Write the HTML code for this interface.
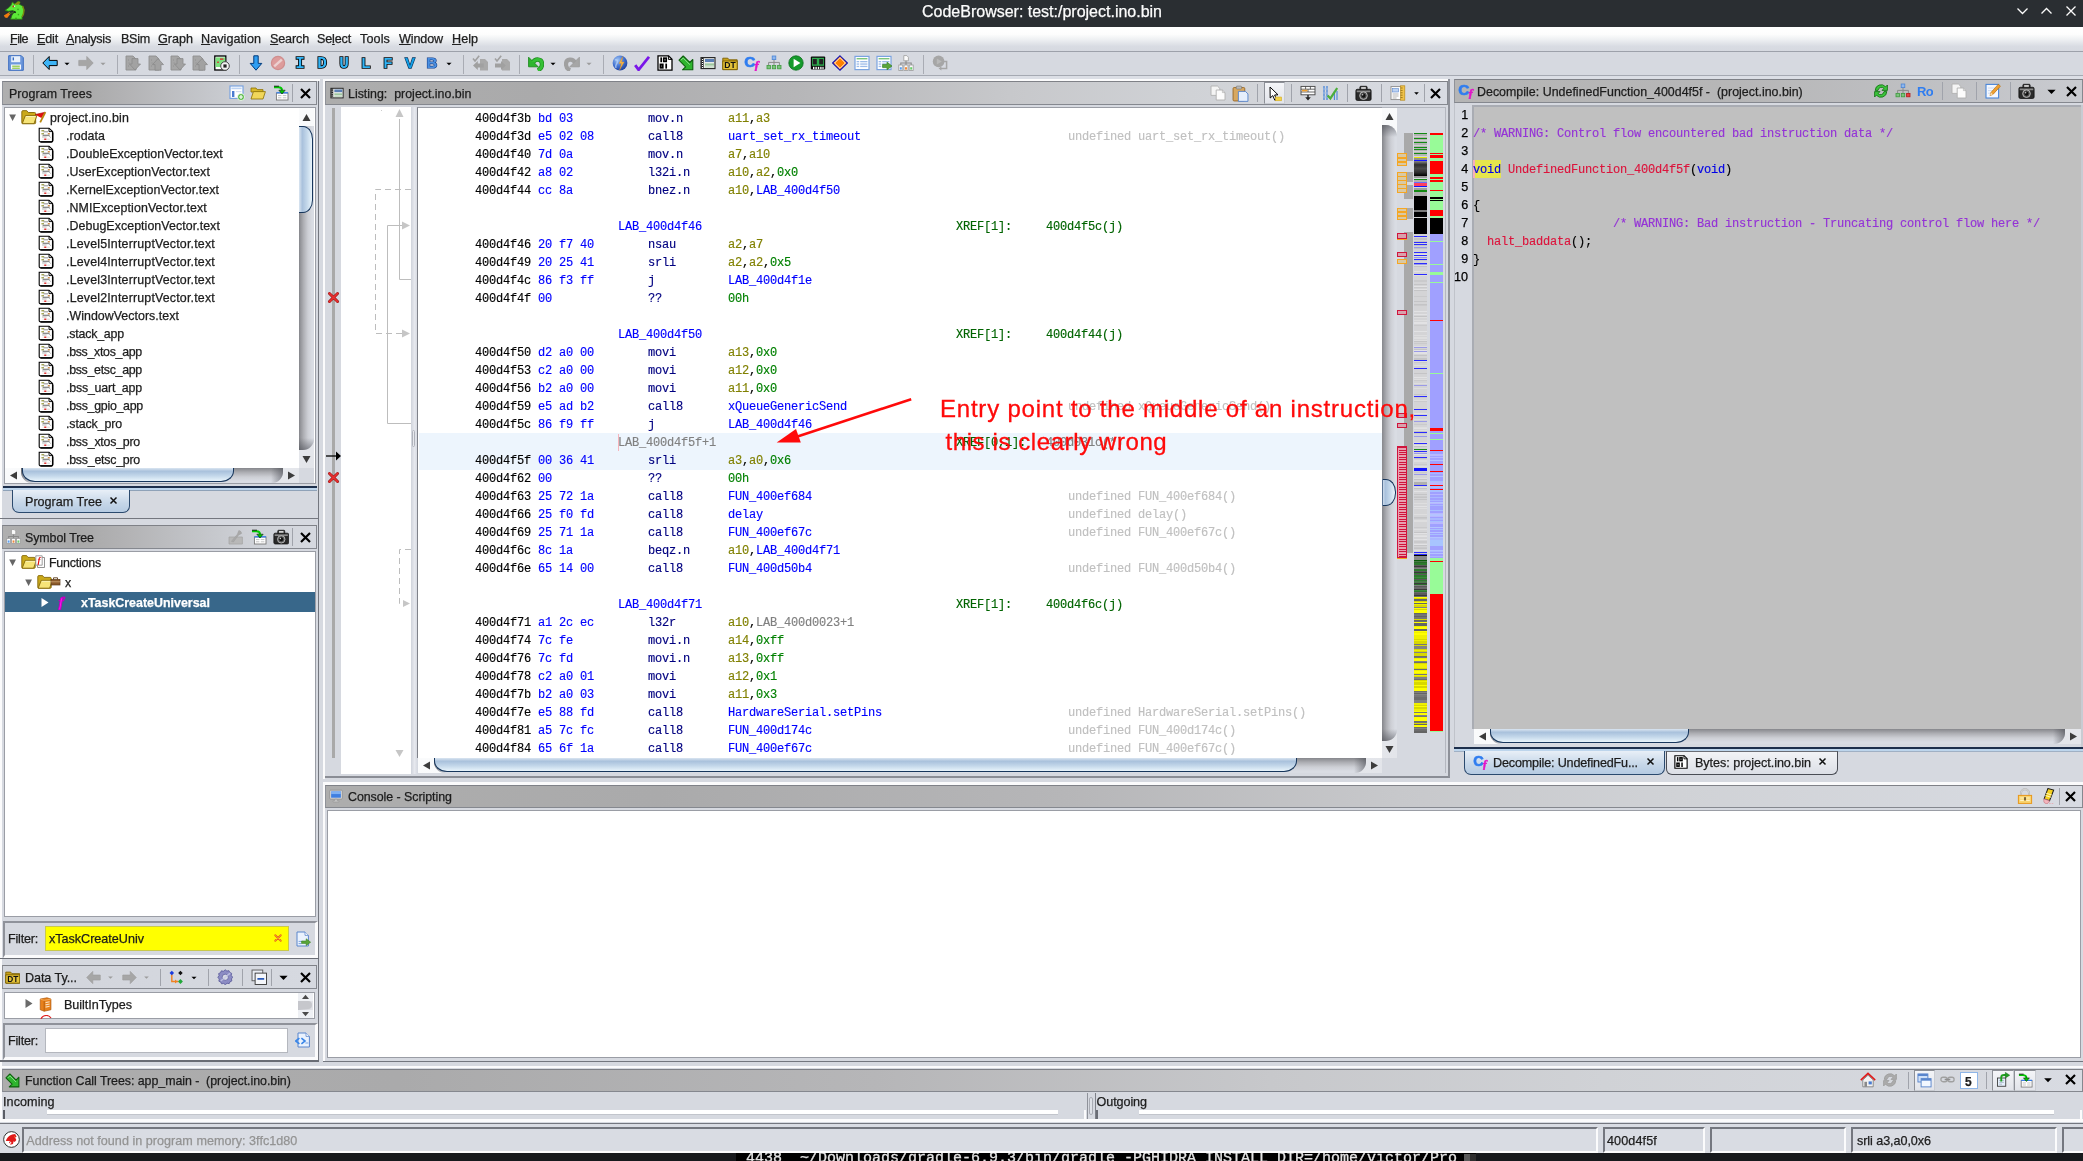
<!DOCTYPE html><html><head><meta charset="utf-8"><title>CodeBrowser</title><style>
*{margin:0;padding:0;box-sizing:border-box}
html,body{width:2083px;height:1161px;overflow:hidden;background:#d6d9e0}
body{position:relative;font-family:"Liberation Sans",sans-serif;font-size:13px;color:#1c1c1c}
div,svg{position:absolute}
.t{white-space:pre;line-height:18px;height:18px;-webkit-text-stroke:0.250px}
.m{white-space:pre;line-height:18px;height:18px;font-family:"Liberation Mono",monospace;font-size:12px;letter-spacing:-0.2px;-webkit-text-stroke:0.150px}
.hdr{background:linear-gradient(to right,#c9c9c9 0px,#ababab 90px,#b4b4b6 45%,#d3d6dd 88%);border:1px solid #8e9096;border-top-color:#9a9ca2}
.white{background:#fff}
u{text-decoration:underline;text-underline-offset:1px}
</style></head><body><div id="w" style="left:0;top:0;width:2083px;height:1161px;will-change:transform"><div style="left:0px;top:0px;width:2083px;height:27px;background:#2a2e32"></div><svg style="left:0;top:0" width="28" height="24" viewBox="0 0 28 24"><path d="M5.200 10.200L9 7.400l2-2.200L12.400 2l2.200 2.200L18 1.400l2.200.6-1 2.200 3.400 1.800 1.400 4-.6 4.200-1.400 2.600.2 2.400H10.600l1.400-4 2.200-3-1-1.800-4.600.8-3.200-.6z" fill="#5ce838" stroke="#2a7a12" stroke-width=".8" stroke-linejoin="round"/><path d="M12.400 2l2.200 2.200L18 1.400l2.200.6-1 2.200-3 .8z" fill="#8a8a10"/><path d="M22.600 6l1.400 4-.6 4.200-1.400 2.600" stroke="#7a8a10" stroke-width="1.400" fill="none"/><path d="M3.800 15.400L9.600 12l1 1.800-3.400 4.200-2.200-.4z" fill="#f07a10"/><path d="M9 13.600l4-1" stroke="#3a8a1a" stroke-width="1"/><circle cx="13.400" cy="6.400" r=".9" fill="#d02010"/><circle cx="14.600" cy="6.200" r=".7" fill="#e8e8e8"/><circle cx="18" cy="9.400" r=".8" fill="#3aa81a"/><circle cx="18.400" cy="14.600" r=".8" fill="#3aa81a"/><circle cx="16" cy="18.400" r="1" fill="#3aa81a"/><path d="M14.200 11.400l1.400 1.400" stroke="#111" stroke-width="1.600"/></svg><div class="t" style="left:922px;top:3px;font-size:16px;color:#fcfcfc;letter-spacing:-0.003px;">CodeBrowser: test:/project.ino.bin</div><svg style="left:2010px;top:0" width="73" height="27" viewBox="0 0 73 27"><g stroke="#fcfcfc" stroke-width="1.300" fill="none"><path d="M7.500 8.500l5 5 5-5"/><path d="M31.500 13.500l5-5 5 5"/><path d="M56.500 6.500l9 9M65.500 6.500l-9 9"/></g></svg><div style="left:0px;top:27px;width:2083px;height:24px;background:linear-gradient(to bottom,#ffffff 0%,#fdfdfd 30%,#eceef1 55%,#d9dce3 80%,#d6d9e0 100%)"></div><div class="t" style="left:10px;top:29.500px;font-size:12.600px;letter-spacing:-0.576px;color:#202020"><u>F</u>ile</div><div class="t" style="left:37px;top:29.500px;font-size:12.600px;letter-spacing:-0.178px;color:#202020"><u>E</u>dit</div><div class="t" style="left:66px;top:29.500px;font-size:12.600px;letter-spacing:-0.240px;color:#202020"><u>A</u>nalysis</div><div class="t" style="left:121px;top:29.500px;font-size:12.600px;letter-spacing:-0.276px;color:#202020">BSim</div><div class="t" style="left:158px;top:29.500px;font-size:12.600px;letter-spacing:-0.004px;color:#202020"><u>G</u>raph</div><div class="t" style="left:201px;top:29.500px;font-size:12.600px;letter-spacing:0.046px;color:#202020"><u>N</u>avigation</div><div class="t" style="left:270px;top:29.500px;font-size:12.600px;letter-spacing:-0.154px;color:#202020"><u>S</u>earch</div><div class="t" style="left:317px;top:29.500px;font-size:12.600px;letter-spacing:-0.170px;color:#202020">Se<u>l</u>ect</div><div class="t" style="left:360px;top:29.500px;font-size:12.600px;letter-spacing:0.117px;color:#202020">Tools</div><div class="t" style="left:399px;top:29.500px;font-size:12.600px;letter-spacing:-0.136px;color:#202020"><u>W</u>indow</div><div class="t" style="left:452px;top:29.500px;font-size:12.600px;letter-spacing:0.022px;color:#202020"><u>H</u>elp</div><div style="left:0px;top:51px;width:2083px;height:1px;background:#9da1aa"></div><div style="left:0px;top:52px;width:2083px;height:24px;background:#d6d9e0"></div><div style="left:0px;top:75px;width:2083px;height:1px;background:#a5a9b2"></div><div style="left:0px;top:76px;width:2083px;height:3px;background:#dbdee5"></div><svg style="left:8px;top:55px" width="16" height="16" viewBox="0 0 16 16"><path d="M.7 .7h12.600L15.300 2.700V15.300H.7z" fill="#6d98dc" stroke="#3b6cc0" stroke-width="1"/><rect x="3.200" y="1.200" width="9" height="6" fill="#e8f0fb"/><rect x="4.6" y="2.4" width="1.4" height="3" fill="#3b6cc0"/><rect x="3" y="9.5" width="10" height="5" fill="#f4f7fc"/><rect x="4.2" y="10.6" width="7.6" height="1.2" fill="#8cc63f"/><rect x="4.2" y="12.6" width="7.6" height="1.2" fill="#8cc63f"/></svg><svg style="left:42px;top:55px" width="16" height="16" viewBox="0 0 16 16"><path d="M7.2 1.5 L0.8 8 L7.2 14.5 V10.6 H15.2 V5.4 H7.2z" fill="#3db4f6" stroke="#000" stroke-width="1" stroke-linejoin="miter"/></svg><svg style="left:78px;top:55px" width="16" height="16" viewBox="0 0 16 16"><path d="M8.8 1.5 L15.2 8 L8.8 14.5 V10.6 H0.8 V5.4 H8.8z" fill="#a6a6a6" stroke="#a0a0a0" stroke-width=".8"/></svg><svg style="left:125px;top:55px" width="16" height="16" viewBox="0 0 16 16"><path d="M1 1h7l3 3v11H1z" fill="#a6a6a6" stroke="#8e8e8e" stroke-width=".9"/><path d="M3 5h1M3.600 8h1M3 11h1" stroke="#8e8e8e" stroke-width=".8"/><path d="M7 3.600h6v5.400h2.500L10 15 4.500 9H7z" fill="#a2a2a2" stroke="#8a8a8a" stroke-width=".8"/></svg><svg style="left:147.5px;top:55px" width="16" height="16" viewBox="0 0 16 16"><path d="M1 1h7l3 3v11H1z" fill="#a6a6a6" stroke="#8e8e8e" stroke-width=".9"/><path d="M3 5h1M3.600 8h1M3 11h1" stroke="#8e8e8e" stroke-width=".8"/><path d="M7 15.200h6V9.600h2.500L10 3.600 4.500 9.600H7z" fill="#a2a2a2" stroke="#8a8a8a" stroke-width=".8"/></svg><svg style="left:170px;top:55px" width="16" height="16" viewBox="0 0 16 16"><path d="M1 1h7l3 3v11H1z" fill="#a6a6a6" stroke="#8e8e8e" stroke-width=".9"/><path d="M3 5h1M3.600 8h1M3 11h1" stroke="#8e8e8e" stroke-width=".8"/><path d="M7 3.600h6v5.400h2.500L10 15 4.500 9H7z" fill="#a2a2a2" stroke="#8a8a8a" stroke-width=".8"/></svg><svg style="left:192px;top:55px" width="16" height="16" viewBox="0 0 16 16"><path d="M1 1h7l3 3v11H1z" fill="#a6a6a6" stroke="#8e8e8e" stroke-width=".9"/><path d="M3 5h1M3.600 8h1M3 11h1" stroke="#8e8e8e" stroke-width=".8"/><path d="M7 15.200h6V9.600h2.500L10 3.600 4.500 9.600H7z" fill="#a2a2a2" stroke="#8a8a8a" stroke-width=".8"/></svg><svg style="left:214px;top:55px" width="16" height="16" viewBox="0 0 16 16"><rect x=".8" y="1" width="11" height="14" fill="#fff" stroke="#000" stroke-width="1.3"/><rect x="1.6" y="2.4" width="9.6" height="9.6" fill="#7de07d"/><rect x="6" y="3.4" width="3.4" height="1.4" fill="#d33"/><rect x="3" y="6.6" width="2" height="1.2" fill="#d33"/><circle cx="11" cy="11" r="4.3" fill="#f2f2f2" stroke="#4a4a4a" stroke-width="1"/><rect x="9.4" y="9.4" width="3.2" height="3.2" fill="#222"/></svg><svg style="left:248px;top:55px" width="16" height="16" viewBox="0 0 16 16"><path d="M5.8 .8h4.4v7.6h3.6L8 15.2 2.2 8.4h3.6z" fill="#2f9ef2" stroke="#003a7a" stroke-width="1" stroke-linejoin="round"/></svg><svg style="left:270px;top:55px" width="16" height="16" viewBox="0 0 16 16"><circle cx="8" cy="8" r="6.600" fill="#dd9c9c" stroke="#cf8e8e" stroke-width="1.200"/><path d="M4.200 11.400L11.800 4.600" stroke="#ecd0d0" stroke-width="2.400"/></svg><svg style="left:292px;top:55px" width="16" height="16" viewBox="0 0 16 16"><text x="8" y="13.3" text-anchor="middle" font-family="Liberation Mono" font-weight="bold" font-size="16" fill="#32b4f5" stroke="#000" stroke-width="1.7" paint-order="stroke fill">I</text></svg><svg style="left:314px;top:55px" width="16" height="16" viewBox="0 0 16 16"><text x="8" y="13.3" text-anchor="middle" font-family="Liberation Mono" font-weight="bold" font-size="16" fill="#32b4f5" stroke="#000" stroke-width="1.7" paint-order="stroke fill">D</text></svg><svg style="left:335.5px;top:55px" width="16" height="16" viewBox="0 0 16 16"><text x="8" y="13.3" text-anchor="middle" font-family="Liberation Mono" font-weight="bold" font-size="16" fill="#32b4f5" stroke="#000" stroke-width="1.7" paint-order="stroke fill">U</text></svg><svg style="left:357.5px;top:55px" width="16" height="16" viewBox="0 0 16 16"><text x="8" y="13.3" text-anchor="middle" font-family="Liberation Sans" font-weight="bold" font-size="14.5" fill="#32b4f5" stroke="#000" stroke-width="1.7" paint-order="stroke fill">L</text></svg><svg style="left:379.5px;top:55px" width="16" height="16" viewBox="0 0 16 16"><text x="8" y="13.3" text-anchor="middle" font-family="Liberation Sans" font-weight="bold" font-size="14.5" fill="#32b4f5" stroke="#000" stroke-width="1.7" paint-order="stroke fill">F</text></svg><svg style="left:402px;top:55px" width="16" height="16" viewBox="0 0 16 16"><text x="8" y="13.4" text-anchor="middle" font-family="Liberation Sans" font-weight="bold" font-size="15" fill="#13a0e8" stroke="#06325a" stroke-width="1.3" paint-order="stroke fill">V</text></svg><svg style="left:424px;top:55px" width="16" height="16" viewBox="0 0 16 16"><text x="8" y="13.4" text-anchor="middle" font-family="Liberation Sans" font-weight="bold" font-size="15" fill="#4a90e2" stroke="#16408a" stroke-width="1.2" paint-order="stroke fill">B</text></svg><svg style="left:472px;top:55px" width="16" height="16" viewBox="0 0 16 16"><path d="M8 4h5l3 3v8.5H8z" fill="#a9a9a9"/><path d="M1 3.6l2 2.4L7.2 .8" stroke="#a0a0a0" stroke-width="1.6" fill="none"/><path d="M1 10.5L5.8 6v2.6h6v3.8h-6V15z" fill="#a0a0a0"/></svg><svg style="left:494px;top:55px" width="16" height="16" viewBox="0 0 16 16"><path d="M8 4h5l3 3v8.5H8z" fill="#a9a9a9"/><path d="M1 3.6l2 2.4L7.2 .8" stroke="#a0a0a0" stroke-width="1.6" fill="none"/><path d="M11.8 10.5L7 6v2.6H1v3.8h6V15z" fill="#a0a0a0"/></svg><svg style="left:528px;top:55px" width="16" height="16" viewBox="0 0 16 16"><path d="M5 7.400C7.200 3.400 14 3.400 14 9c0 3-1.600 5.200-4.200 6.200" stroke="#1d8a1d" stroke-width="4.400" fill="none"/><path d="M.6 2.200v9.600h9.600z" fill="#2fb62f" stroke="#1d8a1d" stroke-width=".9" stroke-linejoin="round"/><path d="M5 7.400C7.200 3.400 14 3.400 14 9c0 3-1.600 5.200-4.200 6.200" stroke="#35c035" stroke-width="3" fill="none"/></svg><svg style="left:564px;top:55px" width="16" height="16" viewBox="0 0 16 16"><path d="M11 7.400C8.800 3.400 2 3.400 2 9c0 3 1.600 5.200 4.200 6.200" stroke="#a0a0a0" stroke-width="4.200" fill="none"/><path d="M15.400 2.200v9.600H5.800z" fill="#a6a6a6" stroke="#9c9c9c" stroke-width=".9" stroke-linejoin="round"/></svg><svg style="left:612px;top:55px" width="16" height="16" viewBox="0 0 16 16"><defs><radialGradient id="gl" cx=".35" cy=".3" r=".8"><stop offset="0" stop-color="#9fc4f4"/><stop offset=".55" stop-color="#3f6fd0"/><stop offset="1" stop-color="#1c3a94"/></radialGradient></defs><circle cx="8" cy="8" r="7.4" fill="url(#gl)"/><path d="M3 5c2-1 3 1 2 3s-2 3-1 5" stroke="#bcd6f6" stroke-width="1.6" fill="none" opacity=".7"/><path d="M10.8 1.5L7 8.4h2.4L7.6 15l4.6-8H9.6z" fill="#f7b64a" stroke="#d98a1c" stroke-width=".4"/></svg><svg style="left:634px;top:55px" width="16" height="16" viewBox="0 0 16 16"><path d="M1.2 10.2L4.6 14.8 15 1.8" stroke="#7a16e8" stroke-width="2.8" fill="none" stroke-linejoin="miter"/></svg><svg style="left:656.5px;top:55px" width="16" height="16" viewBox="0 0 16 16"><path d="M1 .8h10.6L15 4.2V15.2H1z" fill="#fff" stroke="#000" stroke-width="1.3"/><path d="M11.4 .8v3.6H15" fill="none" stroke="#000" stroke-width="1"/><g fill="none" stroke="#000" stroke-width="1.700"><path d="M4.200 2.400v4.800"/><rect x="6.800" y="3.200" width="2.400" height="3.200"/><rect x="3.400" y="9.400" width="2.400" height="3.400"/><path d="M9.200 8.600v5"/></g></svg><svg style="left:678px;top:55px" width="16" height="16" viewBox="0 0 16 16"><path d="M4.500 14.800h10.300V4.500l-3 3L5.200 1 1 5.200l6.600 6.600z" fill="#2fb52f" stroke="#0d5e0d" stroke-width="1.100" stroke-linejoin="round"/><path d="M3 5.200l2.200-2.200 6.600 6.600" stroke="#8fe08f" stroke-width="1" fill="none"/></svg><svg style="left:700px;top:55px" width="16" height="16" viewBox="0 0 16 16"><rect x="1" y="2.6" width="14" height="11" fill="#e9ece9" stroke="#222" stroke-width="1.1"/><rect x="1.4" y="3" width="2.2" height="10.2" fill="#111"/><g fill="#fff"><rect x="2" y="4" width="1" height="1"/><rect x="2" y="6" width="1" height="1"/><rect x="2" y="8" width="1" height="1"/><rect x="2" y="10" width="1" height="1"/><rect x="2" y="12" width="1" height="1"/></g><rect x="5" y="4" width="9" height="3" fill="#5b7fb5"/><rect x="5" y="8.4" width="9" height="2.2" fill="#9ec79e"/><rect x="5" y="11.2" width="9" height="1.4" fill="#c7dcc7"/></svg><svg style="left:722px;top:55px" width="16" height="16" viewBox="0 0 16 16"><path d="M.8 3.2h5l1.4 1.6h8v9.8H.8z" fill="#c9a21a" stroke="#7a5e00" stroke-width=".9"/><path d="M.8 6h14.4v8.6H.8z" fill="#e3c23a" stroke="#7a5e00" stroke-width=".9"/><text x="8" y="13.4" text-anchor="middle" font-family="Liberation Sans" font-weight="bold" font-size="8.6" fill="#111">DT</text></svg><svg style="left:744px;top:55px" width="16" height="16" viewBox="0 0 16 16"><text x="5.800" y="12" text-anchor="middle" font-family="Liberation Sans" font-weight="bold" font-size="15.500" fill="#2f7df0" stroke="#2f7df0" stroke-width=".7">C</text><text x="12.600" y="15.400" text-anchor="middle" font-family="Liberation Serif" font-style="italic" font-weight="bold" font-size="12.500" fill="#e414c8" stroke="#e414c8" stroke-width=".5">f</text></svg><svg style="left:766px;top:55px" width="16" height="16" viewBox="0 0 16 16"><rect x="6.2" y="1" width="3.6" height="3.6" fill="#8fb7ee" stroke="#4a86d8" stroke-width=".8"/><path d="M8 4.8v2.6M2.6 10V7.4h10.8V10M8 7.4V10" stroke="#8a8a8a" stroke-width="1" fill="none"/><g fill="#7cc47c" stroke="#3f9a3f" stroke-width=".8"><rect x="1" y="10.4" width="3.4" height="3.4"/><rect x="6.3" y="10.4" width="3.4" height="3.4"/><rect x="11.6" y="10.4" width="3.4" height="3.4"/></g></svg><svg style="left:788px;top:55px" width="16" height="16" viewBox="0 0 16 16"><circle cx="8" cy="8" r="7.2" fill="#159a2c" stroke="#0b6e1c" stroke-width=".8"/><path d="M5.6 3.8L12.4 8l-6.8 4.2z" fill="#fff"/></svg><svg style="left:810px;top:55px" width="16" height="16" viewBox="0 0 16 16"><rect x=".8" y="1.4" width="14.4" height="13.2" rx="1" fill="#0a0a0a"/><rect x="2" y="2.8" width="12" height="8" fill="#2fae4f"/><rect x="2.8" y="4" width="4" height="5.4" fill="#222"/><rect x="9.2" y="4" width="4" height="5.4" fill="#222"/><g fill="#fff"><rect x="3" y="11.8" width="1.4" height="2.4"/><rect x="5.4" y="11.8" width="1.4" height="2.4"/><rect x="7.8" y="11.8" width="1.4" height="2.4"/><rect x="10.2" y="11.8" width="1.4" height="2.4"/><rect x="12.4" y="11.8" width="1.2" height="2.4"/></g></svg><svg style="left:832px;top:55px" width="16" height="16" viewBox="0 0 16 16"><path d="M8 .8L15.4 8 8 15.2 .6 8z" fill="#ff8000" stroke="#1414b4" stroke-width="1.1"/><path d="M8 2.6L13.4 8 8 13.4 2.6 8z" fill="none" stroke="#fff" stroke-width=".9"/></svg><svg style="left:854px;top:55px" width="16" height="16" viewBox="0 0 16 16"><rect x="1" y="1.4" width="14" height="13.2" fill="#fff" stroke="#7aa3e0" stroke-width="1.2"/><rect x="2.6" y="3" width="10.8" height="1.4" fill="#7cc47c"/><g fill="#9dbbe8"><rect x="2.6" y="6" width="2.6" height="1.3"/><rect x="6.2" y="6" width="7.2" height="1.3"/><rect x="2.6" y="8.4" width="2.6" height="1.3"/><rect x="6.2" y="8.4" width="7.2" height="1.3"/><rect x="2.6" y="10.8" width="2.6" height="1.3"/><rect x="6.2" y="10.8" width="7.2" height="1.3"/></g></svg><svg style="left:876px;top:55px" width="16" height="16" viewBox="0 0 16 16"><rect x="1" y="1.4" width="14" height="13.2" fill="#fff" stroke="#7aa3e0" stroke-width="1.2"/><rect x="2.6" y="3" width="10.8" height="1.4" fill="#7cc47c"/><g fill="#9dbbe8"><rect x="2.6" y="6" width="2.6" height="1.3"/><rect x="6.2" y="6" width="7.2" height="1.3"/><rect x="2.6" y="8.4" width="2.6" height="1.3"/><rect x="6.2" y="8.4" width="7.2" height="1.3"/><rect x="2.6" y="10.8" width="2.6" height="1.3"/><rect x="6.2" y="10.8" width="7.2" height="1.3"/></g><path d="M6.6 9.4h4.4V7.2l5 3.8-5 3.8v-2.2H6.6z" fill="#5aa63a" stroke="#3a8222" stroke-width=".7"/></svg><svg style="left:898px;top:55px" width="16" height="16" viewBox="0 0 16 16"><path d="M5.800 .6h3l1.600 1.600v3.600H5.800z" fill="#fbfbfb" stroke="#9a9a9a" stroke-width=".8"/><path d="M8 5.800v2.200M2.800 10.200V8h10.400v2.200M8 8v2.200" stroke="#8a8a8a" stroke-width="1.100" fill="none"/><g stroke="#9a9a9a" stroke-width=".8" fill="#fbfbfb"><rect x=".8" y="10" width="4" height="5.400"/><rect x="6" y="10" width="4" height="5.400"/><rect x="11.200" y="10" width="4" height="5.400"/></g><rect x="1.800" y="12.200" width="2" height="2.400" fill="#5a9ef0"/><rect x="7" y="12.200" width="2" height="2.400" fill="#f08a3a"/><rect x="12.200" y="12.200" width="2" height="2.400" fill="#6acc6a"/></svg><svg style="left:932px;top:55px" width="16" height="16" viewBox="0 0 16 16"><circle cx="6.6" cy="6.4" r="5.8" fill="#a6a6a6"/><path d="M4.8 3.4l5 3-5 3z" fill="#b9b9b9"/><path d="M12 6.4h2.6v7H8.4" stroke="#a6a6a6" stroke-width="1.5" fill="none"/><path d="M9.4 11.2L6.6 13.4l2.8 2.2z" fill="#a6a6a6"/></svg><svg style="left:61px;top:57.5px" width="12" height="12" viewBox="0 0 16 16"><path d="M4.6 6.2h6.8L8 9.8z" fill="#000"/></svg><svg style="left:443px;top:57.5px" width="12" height="12" viewBox="0 0 16 16"><path d="M4.6 6.2h6.8L8 9.8z" fill="#000"/></svg><svg style="left:547px;top:57.5px" width="12" height="12" viewBox="0 0 16 16"><path d="M4.6 6.2h6.8L8 9.8z" fill="#000"/></svg><svg style="left:97px;top:57.5px" width="12" height="12" viewBox="0 0 16 16"><path d="M4.6 6.4h6.8L8 9.8z" fill="#9c9c9c"/></svg><svg style="left:583px;top:57.5px" width="12" height="12" viewBox="0 0 16 16"><path d="M4.6 6.4h6.8L8 9.8z" fill="#9c9c9c"/></svg><div style="left:33px;top:55px;width:1px;height:19px;background:#a9acb4"></div><div style="left:117px;top:55px;width:1px;height:19px;background:#a9acb4"></div><div style="left:239px;top:55px;width:1px;height:19px;background:#a9acb4"></div><div style="left:463px;top:55px;width:1px;height:19px;background:#a9acb4"></div><div style="left:519px;top:55px;width:1px;height:19px;background:#a9acb4"></div><div style="left:603px;top:55px;width:1px;height:19px;background:#a9acb4"></div><div style="left:923px;top:55px;width:1px;height:19px;background:#a9acb4"></div><div style="left:0px;top:79px;width:320px;height:2px;background:#fbfbfc"></div><div style="left:0px;top:79px;width:2px;height:1043px;background:#fbfbfc"></div><div style="left:317.6px;top:81px;width:1.1px;height:980px;background:#74777f"></div><div style="left:2px;top:81px;width:315px;height:24px;background:linear-gradient(to right,#afafaf 0px,#a8a8a8 75px,#b3b3b5 40%,#cfd2d8 80%,#d6d9e0 100%);border:1px solid #85888f;border-top-color:#7f8187;border-left-color:#8f9299"></div><div class="t" style="left:9px;top:84.6px;font-size:12.4px;letter-spacing:0.077px;">Program Trees</div><svg style="left:229px;top:85px" width="16" height="16" viewBox="0 0 16 16"><rect x="1" y="1" width="13" height="12.4" fill="#fff" stroke="#7aa3e0" stroke-width="1.2"/><rect x="2.4" y="2.6" width="10.2" height="1.6" fill="#bcd2f2"/><rect x="3" y="6" width="2.4" height="6" fill="#4a7bd0"/><rect x="6.8" y="6" width="5.6" height="1.2" fill="#d0dcf0"/><circle cx="12" cy="12" r="3.5" fill="#57b947" stroke="#fff" stroke-width=".8"/><path d="M12 10v4M10 12h4" stroke="#fff" stroke-width="1.2"/></svg><svg style="left:250px;top:84.5px" width="16" height="16" viewBox="0 0 16 16"><path d="M1 3h5l1.2 1.6H13V7H1z" fill="#d9b92a" stroke="#8a6e00" stroke-width=".8"/><path d="M3.4 6.6h12L13 14H1z" fill="#f0d65a" stroke="#8a6e00" stroke-width=".8" stroke-linejoin="round"/></svg><svg style="left:273px;top:85px" width="16" height="16" viewBox="0 0 16 16"><rect x="3.4" y="8" width="11.6" height="7" fill="#fff" stroke="#777" stroke-width=".9"/><rect x="3.4" y="7.2" width="11.6" height="1.2" fill="#2f7df0"/><path d="M5 10.6h3.4M9.8 10.6h3.6M5 12.8h3.4M9.8 12.8h3.6" stroke="#bbb" stroke-width=".9"/><path d="M1 2.2h4.4c2.2 0 3.6 1 3.6 3" stroke="#00c800" stroke-width="1.9" fill="none"/><path d="M1 1.2h5" stroke="#000" stroke-width=".8"/><path d="M5.8 5.2h6.4L9 9z" fill="#00c800" stroke="#000" stroke-width=".5"/></svg><div style="left:292px;top:84px;width:1px;height:18px;background:#a0a3ab"></div><svg style="left:297.5px;top:85.5px" width="15" height="15" viewBox="0 0 16 16"><path d="M3.2 3.2L12.8 12.8M12.8 3.2L3.2 12.8" stroke="#000" stroke-width="2.3" fill="none"/></svg><div style="left:3px;top:105px;width:314px;height:382px;background:#d6d9e0"></div><div style="left:4px;top:107px;width:312px;height:377px;background:#fff;border:1px solid #9a9da5"></div><svg style="left:8px;top:113px" width="10" height="9" viewBox="0 0 10 9"><path d="M1.200 1.500h6.800L4.600 8z" fill="#666"/></svg><svg style="left:21.25px;top:108.55px" width="16.5" height="16.5" viewBox="0 0 16 16"><path d="M.8 2.600a1 1 0 0 1 1-1h3.800l1.400 1.800h6.200a1 1 0 0 1 1 1V13.400a.8.800 0 0 1-.8.800H1.600a.8.800 0 0 1-.8-.8z" fill="#caa91a" stroke="#86690a" stroke-width=".9"/><path d="M4.200 6.400h11.200L12.600 14.200H1.200z" fill="#f6e478" stroke="#86690a" stroke-width=".9" stroke-linejoin="round"/><path d="M4.800 7.300h9.400" stroke="#fdf8c8" stroke-width=".8"/></svg><svg style="left:34px;top:110px" width="13" height="14" viewBox="0 0 13 14"><path d="M1 4.600L11.200 2.200 7.400 8z" fill="#e01010"/><path d="M1 4.600L11.200 2.200" stroke="#a00808" stroke-width=".6"/><path d="M11.400 2.200L6.200 12.400" stroke="#b8860b" stroke-width="1.800"/></svg><div class="t" style="left:50px;top:108.5px;font-size:12.4px;letter-spacing:0.120px;">project.ino.bin</div><svg style="left:38px;top:127.3px" width="16" height="16" viewBox="0 0 16 16"><path d="M1.200 1.200h9.800l3.600 3.400V13.600a1.200 1.200 0 0 1-1.200 1.200H2.400a1.200 1.200 0 0 1-1.200-1.200z" fill="#fff" stroke="#000" stroke-width="1.100"/><path d="M2.400 14.900h11a1.300 1.300 0 0 0 1.300-1.300V5.600" fill="none" stroke="#000" stroke-width="1.500"/><path d="M11 1.200v3.400h3.600" fill="none" stroke="#000" stroke-width=".9"/><path d="M3.400 3.800h2.800" stroke="#8a8a20" stroke-width="1.100"/><path d="M5.400 4.800h4.600" stroke="#9a9a9a" stroke-width="1.100"/><path d="M3.400 6.800h2.600" stroke="#8a8a20" stroke-width="1.100"/><path d="M9.800 6.800h2" stroke="#c06a10" stroke-width="1.100"/><path d="M4.600 8.400h7" stroke="#8c8c8c" stroke-width="1.500"/><path d="M4 10h4.600" stroke="#bdbdbd" stroke-width="1"/><path d="M11.400 9.400l1.200 1" stroke="#777" stroke-width=".8"/><path d="M6.200 12.200h2.200" stroke="#d81818" stroke-width="1.300"/><path d="M4.600 12.200h1M9.200 12.200h2.600" stroke="#d0d0d0" stroke-width=".9"/></svg><div class="t" style="left:66px;top:126.5px;font-size:12.4px;letter-spacing:0.056px;">.rodata</div><svg style="left:38px;top:145.3px" width="16" height="16" viewBox="0 0 16 16"><path d="M1.200 1.200h9.800l3.600 3.400V13.600a1.200 1.200 0 0 1-1.200 1.200H2.400a1.200 1.200 0 0 1-1.200-1.200z" fill="#fff" stroke="#000" stroke-width="1.100"/><path d="M2.400 14.900h11a1.300 1.300 0 0 0 1.300-1.300V5.600" fill="none" stroke="#000" stroke-width="1.500"/><path d="M11 1.200v3.400h3.600" fill="none" stroke="#000" stroke-width=".9"/><path d="M3.400 3.800h2.800" stroke="#8a8a20" stroke-width="1.100"/><path d="M5.400 4.800h4.600" stroke="#9a9a9a" stroke-width="1.100"/><path d="M3.400 6.800h2.600" stroke="#8a8a20" stroke-width="1.100"/><path d="M9.800 6.800h2" stroke="#c06a10" stroke-width="1.100"/><path d="M4.600 8.400h7" stroke="#8c8c8c" stroke-width="1.500"/><path d="M4 10h4.600" stroke="#bdbdbd" stroke-width="1"/><path d="M11.400 9.400l1.200 1" stroke="#777" stroke-width=".8"/><path d="M6.200 12.200h2.200" stroke="#d81818" stroke-width="1.300"/><path d="M4.600 12.200h1M9.200 12.200h2.600" stroke="#d0d0d0" stroke-width=".9"/></svg><div class="t" style="left:66px;top:144.5px;font-size:12.4px;letter-spacing:0.070px;">.DoubleExceptionVector.text</div><svg style="left:38px;top:163.3px" width="16" height="16" viewBox="0 0 16 16"><path d="M1.200 1.200h9.800l3.600 3.400V13.600a1.200 1.200 0 0 1-1.200 1.200H2.400a1.200 1.200 0 0 1-1.200-1.200z" fill="#fff" stroke="#000" stroke-width="1.100"/><path d="M2.400 14.900h11a1.300 1.300 0 0 0 1.300-1.300V5.600" fill="none" stroke="#000" stroke-width="1.500"/><path d="M11 1.200v3.400h3.600" fill="none" stroke="#000" stroke-width=".9"/><path d="M3.400 3.800h2.800" stroke="#8a8a20" stroke-width="1.100"/><path d="M5.400 4.800h4.600" stroke="#9a9a9a" stroke-width="1.100"/><path d="M3.400 6.800h2.600" stroke="#8a8a20" stroke-width="1.100"/><path d="M9.800 6.800h2" stroke="#c06a10" stroke-width="1.100"/><path d="M4.600 8.400h7" stroke="#8c8c8c" stroke-width="1.500"/><path d="M4 10h4.600" stroke="#bdbdbd" stroke-width="1"/><path d="M11.400 9.400l1.200 1" stroke="#777" stroke-width=".8"/><path d="M6.200 12.200h2.200" stroke="#d81818" stroke-width="1.300"/><path d="M4.600 12.200h1M9.200 12.200h2.600" stroke="#d0d0d0" stroke-width=".9"/></svg><div class="t" style="left:66px;top:162.5px;font-size:12.4px;letter-spacing:0.081px;">.UserExceptionVector.text</div><svg style="left:38px;top:181.3px" width="16" height="16" viewBox="0 0 16 16"><path d="M1.200 1.200h9.800l3.600 3.400V13.600a1.200 1.200 0 0 1-1.200 1.200H2.400a1.200 1.200 0 0 1-1.200-1.200z" fill="#fff" stroke="#000" stroke-width="1.100"/><path d="M2.400 14.900h11a1.300 1.300 0 0 0 1.300-1.300V5.600" fill="none" stroke="#000" stroke-width="1.500"/><path d="M11 1.200v3.400h3.600" fill="none" stroke="#000" stroke-width=".9"/><path d="M3.400 3.800h2.800" stroke="#8a8a20" stroke-width="1.100"/><path d="M5.400 4.800h4.600" stroke="#9a9a9a" stroke-width="1.100"/><path d="M3.400 6.800h2.600" stroke="#8a8a20" stroke-width="1.100"/><path d="M9.800 6.800h2" stroke="#c06a10" stroke-width="1.100"/><path d="M4.600 8.400h7" stroke="#8c8c8c" stroke-width="1.500"/><path d="M4 10h4.600" stroke="#bdbdbd" stroke-width="1"/><path d="M11.400 9.400l1.200 1" stroke="#777" stroke-width=".8"/><path d="M6.200 12.200h2.200" stroke="#d81818" stroke-width="1.300"/><path d="M4.600 12.200h1M9.200 12.200h2.600" stroke="#d0d0d0" stroke-width=".9"/></svg><div class="t" style="left:66px;top:180.5px;font-size:12.4px;letter-spacing:0.050px;">.KernelExceptionVector.text</div><svg style="left:38px;top:199.3px" width="16" height="16" viewBox="0 0 16 16"><path d="M1.200 1.200h9.800l3.600 3.400V13.600a1.200 1.200 0 0 1-1.200 1.200H2.400a1.200 1.200 0 0 1-1.200-1.200z" fill="#fff" stroke="#000" stroke-width="1.100"/><path d="M2.400 14.900h11a1.300 1.300 0 0 0 1.300-1.300V5.600" fill="none" stroke="#000" stroke-width="1.500"/><path d="M11 1.200v3.400h3.600" fill="none" stroke="#000" stroke-width=".9"/><path d="M3.400 3.800h2.800" stroke="#8a8a20" stroke-width="1.100"/><path d="M5.400 4.800h4.600" stroke="#9a9a9a" stroke-width="1.100"/><path d="M3.400 6.800h2.600" stroke="#8a8a20" stroke-width="1.100"/><path d="M9.800 6.800h2" stroke="#c06a10" stroke-width="1.100"/><path d="M4.600 8.400h7" stroke="#8c8c8c" stroke-width="1.500"/><path d="M4 10h4.600" stroke="#bdbdbd" stroke-width="1"/><path d="M11.400 9.400l1.200 1" stroke="#777" stroke-width=".8"/><path d="M6.200 12.200h2.200" stroke="#d81818" stroke-width="1.300"/><path d="M4.600 12.200h1M9.200 12.200h2.600" stroke="#d0d0d0" stroke-width=".9"/></svg><div class="t" style="left:66px;top:198.5px;font-size:12.4px;letter-spacing:0.103px;">.NMIExceptionVector.text</div><svg style="left:38px;top:217.3px" width="16" height="16" viewBox="0 0 16 16"><path d="M1.200 1.200h9.800l3.600 3.400V13.600a1.200 1.200 0 0 1-1.200 1.200H2.400a1.200 1.200 0 0 1-1.200-1.200z" fill="#fff" stroke="#000" stroke-width="1.100"/><path d="M2.400 14.900h11a1.300 1.300 0 0 0 1.300-1.300V5.600" fill="none" stroke="#000" stroke-width="1.500"/><path d="M11 1.200v3.400h3.600" fill="none" stroke="#000" stroke-width=".9"/><path d="M3.400 3.800h2.800" stroke="#8a8a20" stroke-width="1.100"/><path d="M5.400 4.800h4.600" stroke="#9a9a9a" stroke-width="1.100"/><path d="M3.400 6.800h2.600" stroke="#8a8a20" stroke-width="1.100"/><path d="M9.800 6.800h2" stroke="#c06a10" stroke-width="1.100"/><path d="M4.600 8.400h7" stroke="#8c8c8c" stroke-width="1.500"/><path d="M4 10h4.600" stroke="#bdbdbd" stroke-width="1"/><path d="M11.400 9.400l1.200 1" stroke="#777" stroke-width=".8"/><path d="M6.200 12.200h2.200" stroke="#d81818" stroke-width="1.300"/><path d="M4.600 12.200h1M9.200 12.200h2.600" stroke="#d0d0d0" stroke-width=".9"/></svg><div class="t" style="left:66px;top:216.5px;font-size:12.4px;letter-spacing:0.064px;">.DebugExceptionVector.text</div><svg style="left:38px;top:235.3px" width="16" height="16" viewBox="0 0 16 16"><path d="M1.200 1.200h9.800l3.600 3.400V13.600a1.200 1.200 0 0 1-1.200 1.200H2.400a1.200 1.200 0 0 1-1.200-1.200z" fill="#fff" stroke="#000" stroke-width="1.100"/><path d="M2.400 14.900h11a1.300 1.300 0 0 0 1.300-1.300V5.600" fill="none" stroke="#000" stroke-width="1.500"/><path d="M11 1.200v3.400h3.600" fill="none" stroke="#000" stroke-width=".9"/><path d="M3.400 3.800h2.800" stroke="#8a8a20" stroke-width="1.100"/><path d="M5.400 4.800h4.600" stroke="#9a9a9a" stroke-width="1.100"/><path d="M3.400 6.800h2.600" stroke="#8a8a20" stroke-width="1.100"/><path d="M9.800 6.800h2" stroke="#c06a10" stroke-width="1.100"/><path d="M4.600 8.400h7" stroke="#8c8c8c" stroke-width="1.500"/><path d="M4 10h4.600" stroke="#bdbdbd" stroke-width="1"/><path d="M11.400 9.400l1.200 1" stroke="#777" stroke-width=".8"/><path d="M6.200 12.200h2.200" stroke="#d81818" stroke-width="1.300"/><path d="M4.600 12.200h1M9.200 12.200h2.600" stroke="#d0d0d0" stroke-width=".9"/></svg><div class="t" style="left:66px;top:234.5px;font-size:12.4px;letter-spacing:0.183px;">.Level5InterruptVector.text</div><svg style="left:38px;top:253.3px" width="16" height="16" viewBox="0 0 16 16"><path d="M1.200 1.200h9.800l3.600 3.400V13.600a1.200 1.200 0 0 1-1.200 1.200H2.400a1.200 1.200 0 0 1-1.200-1.200z" fill="#fff" stroke="#000" stroke-width="1.100"/><path d="M2.400 14.900h11a1.300 1.300 0 0 0 1.300-1.300V5.600" fill="none" stroke="#000" stroke-width="1.500"/><path d="M11 1.200v3.400h3.600" fill="none" stroke="#000" stroke-width=".9"/><path d="M3.400 3.800h2.800" stroke="#8a8a20" stroke-width="1.100"/><path d="M5.400 4.800h4.600" stroke="#9a9a9a" stroke-width="1.100"/><path d="M3.400 6.800h2.600" stroke="#8a8a20" stroke-width="1.100"/><path d="M9.800 6.800h2" stroke="#c06a10" stroke-width="1.100"/><path d="M4.600 8.400h7" stroke="#8c8c8c" stroke-width="1.500"/><path d="M4 10h4.600" stroke="#bdbdbd" stroke-width="1"/><path d="M11.400 9.400l1.200 1" stroke="#777" stroke-width=".8"/><path d="M6.200 12.200h2.200" stroke="#d81818" stroke-width="1.300"/><path d="M4.600 12.200h1M9.200 12.200h2.600" stroke="#d0d0d0" stroke-width=".9"/></svg><div class="t" style="left:66px;top:252.5px;font-size:12.4px;letter-spacing:0.183px;">.Level4InterruptVector.text</div><svg style="left:38px;top:271.3px" width="16" height="16" viewBox="0 0 16 16"><path d="M1.200 1.200h9.800l3.600 3.400V13.600a1.200 1.200 0 0 1-1.200 1.200H2.400a1.200 1.200 0 0 1-1.200-1.200z" fill="#fff" stroke="#000" stroke-width="1.100"/><path d="M2.400 14.900h11a1.300 1.300 0 0 0 1.300-1.300V5.600" fill="none" stroke="#000" stroke-width="1.500"/><path d="M11 1.200v3.400h3.600" fill="none" stroke="#000" stroke-width=".9"/><path d="M3.400 3.800h2.800" stroke="#8a8a20" stroke-width="1.100"/><path d="M5.400 4.800h4.600" stroke="#9a9a9a" stroke-width="1.100"/><path d="M3.400 6.800h2.600" stroke="#8a8a20" stroke-width="1.100"/><path d="M9.800 6.800h2" stroke="#c06a10" stroke-width="1.100"/><path d="M4.600 8.400h7" stroke="#8c8c8c" stroke-width="1.500"/><path d="M4 10h4.600" stroke="#bdbdbd" stroke-width="1"/><path d="M11.400 9.400l1.200 1" stroke="#777" stroke-width=".8"/><path d="M6.200 12.200h2.200" stroke="#d81818" stroke-width="1.300"/><path d="M4.600 12.200h1M9.200 12.200h2.600" stroke="#d0d0d0" stroke-width=".9"/></svg><div class="t" style="left:66px;top:270.5px;font-size:12.4px;letter-spacing:0.183px;">.Level3InterruptVector.text</div><svg style="left:38px;top:289.3px" width="16" height="16" viewBox="0 0 16 16"><path d="M1.200 1.200h9.800l3.600 3.400V13.600a1.200 1.200 0 0 1-1.200 1.200H2.400a1.200 1.200 0 0 1-1.200-1.200z" fill="#fff" stroke="#000" stroke-width="1.100"/><path d="M2.400 14.900h11a1.300 1.300 0 0 0 1.300-1.300V5.600" fill="none" stroke="#000" stroke-width="1.500"/><path d="M11 1.200v3.400h3.600" fill="none" stroke="#000" stroke-width=".9"/><path d="M3.400 3.800h2.800" stroke="#8a8a20" stroke-width="1.100"/><path d="M5.400 4.800h4.600" stroke="#9a9a9a" stroke-width="1.100"/><path d="M3.400 6.800h2.600" stroke="#8a8a20" stroke-width="1.100"/><path d="M9.800 6.800h2" stroke="#c06a10" stroke-width="1.100"/><path d="M4.600 8.400h7" stroke="#8c8c8c" stroke-width="1.500"/><path d="M4 10h4.600" stroke="#bdbdbd" stroke-width="1"/><path d="M11.400 9.400l1.200 1" stroke="#777" stroke-width=".8"/><path d="M6.200 12.200h2.200" stroke="#d81818" stroke-width="1.300"/><path d="M4.600 12.200h1M9.200 12.200h2.600" stroke="#d0d0d0" stroke-width=".9"/></svg><div class="t" style="left:66px;top:288.5px;font-size:12.4px;letter-spacing:0.183px;">.Level2InterruptVector.text</div><svg style="left:38px;top:307.3px" width="16" height="16" viewBox="0 0 16 16"><path d="M1.200 1.200h9.800l3.600 3.400V13.600a1.200 1.200 0 0 1-1.200 1.200H2.400a1.200 1.200 0 0 1-1.200-1.200z" fill="#fff" stroke="#000" stroke-width="1.100"/><path d="M2.400 14.900h11a1.300 1.300 0 0 0 1.300-1.300V5.600" fill="none" stroke="#000" stroke-width="1.500"/><path d="M11 1.200v3.400h3.600" fill="none" stroke="#000" stroke-width=".9"/><path d="M3.400 3.800h2.800" stroke="#8a8a20" stroke-width="1.100"/><path d="M5.400 4.800h4.600" stroke="#9a9a9a" stroke-width="1.100"/><path d="M3.400 6.800h2.600" stroke="#8a8a20" stroke-width="1.100"/><path d="M9.800 6.800h2" stroke="#c06a10" stroke-width="1.100"/><path d="M4.600 8.400h7" stroke="#8c8c8c" stroke-width="1.500"/><path d="M4 10h4.600" stroke="#bdbdbd" stroke-width="1"/><path d="M11.400 9.400l1.200 1" stroke="#777" stroke-width=".8"/><path d="M6.200 12.200h2.200" stroke="#d81818" stroke-width="1.300"/><path d="M4.600 12.200h1M9.200 12.200h2.600" stroke="#d0d0d0" stroke-width=".9"/></svg><div class="t" style="left:66px;top:306.5px;font-size:12.4px;letter-spacing:0.035px;">.WindowVectors.text</div><svg style="left:38px;top:325.3px" width="16" height="16" viewBox="0 0 16 16"><path d="M1.200 1.200h9.800l3.600 3.400V13.600a1.200 1.200 0 0 1-1.200 1.200H2.400a1.200 1.200 0 0 1-1.200-1.200z" fill="#fff" stroke="#000" stroke-width="1.100"/><path d="M2.400 14.900h11a1.300 1.300 0 0 0 1.300-1.300V5.600" fill="none" stroke="#000" stroke-width="1.500"/><path d="M11 1.200v3.400h3.600" fill="none" stroke="#000" stroke-width=".9"/><path d="M3.400 3.800h2.800" stroke="#8a8a20" stroke-width="1.100"/><path d="M5.400 4.800h4.600" stroke="#9a9a9a" stroke-width="1.100"/><path d="M3.400 6.800h2.600" stroke="#8a8a20" stroke-width="1.100"/><path d="M9.800 6.800h2" stroke="#c06a10" stroke-width="1.100"/><path d="M4.600 8.400h7" stroke="#8c8c8c" stroke-width="1.500"/><path d="M4 10h4.600" stroke="#bdbdbd" stroke-width="1"/><path d="M11.400 9.400l1.200 1" stroke="#777" stroke-width=".8"/><path d="M6.200 12.200h2.200" stroke="#d81818" stroke-width="1.300"/><path d="M4.600 12.200h1M9.200 12.200h2.600" stroke="#d0d0d0" stroke-width=".9"/></svg><div class="t" style="left:66px;top:324.5px;font-size:12.4px;letter-spacing:-0.197px;">.stack_app</div><svg style="left:38px;top:343.3px" width="16" height="16" viewBox="0 0 16 16"><path d="M1.200 1.200h9.800l3.600 3.400V13.600a1.200 1.200 0 0 1-1.200 1.200H2.400a1.200 1.200 0 0 1-1.200-1.200z" fill="#fff" stroke="#000" stroke-width="1.100"/><path d="M2.400 14.900h11a1.300 1.300 0 0 0 1.300-1.300V5.600" fill="none" stroke="#000" stroke-width="1.500"/><path d="M11 1.200v3.400h3.600" fill="none" stroke="#000" stroke-width=".9"/><path d="M3.400 3.800h2.800" stroke="#8a8a20" stroke-width="1.100"/><path d="M5.400 4.800h4.600" stroke="#9a9a9a" stroke-width="1.100"/><path d="M3.400 6.800h2.600" stroke="#8a8a20" stroke-width="1.100"/><path d="M9.800 6.800h2" stroke="#c06a10" stroke-width="1.100"/><path d="M4.600 8.400h7" stroke="#8c8c8c" stroke-width="1.500"/><path d="M4 10h4.600" stroke="#bdbdbd" stroke-width="1"/><path d="M11.400 9.400l1.200 1" stroke="#777" stroke-width=".8"/><path d="M6.200 12.200h2.200" stroke="#d81818" stroke-width="1.300"/><path d="M4.600 12.200h1M9.200 12.200h2.600" stroke="#d0d0d0" stroke-width=".9"/></svg><div class="t" style="left:66px;top:342.5px;font-size:12.4px;letter-spacing:-0.305px;">.bss_xtos_app</div><svg style="left:38px;top:361.3px" width="16" height="16" viewBox="0 0 16 16"><path d="M1.200 1.200h9.800l3.600 3.400V13.600a1.200 1.200 0 0 1-1.200 1.200H2.400a1.200 1.200 0 0 1-1.200-1.200z" fill="#fff" stroke="#000" stroke-width="1.100"/><path d="M2.400 14.900h11a1.300 1.300 0 0 0 1.300-1.300V5.600" fill="none" stroke="#000" stroke-width="1.500"/><path d="M11 1.200v3.400h3.600" fill="none" stroke="#000" stroke-width=".9"/><path d="M3.400 3.800h2.800" stroke="#8a8a20" stroke-width="1.100"/><path d="M5.400 4.800h4.600" stroke="#9a9a9a" stroke-width="1.100"/><path d="M3.400 6.800h2.600" stroke="#8a8a20" stroke-width="1.100"/><path d="M9.800 6.800h2" stroke="#c06a10" stroke-width="1.100"/><path d="M4.600 8.400h7" stroke="#8c8c8c" stroke-width="1.500"/><path d="M4 10h4.600" stroke="#bdbdbd" stroke-width="1"/><path d="M11.400 9.400l1.200 1" stroke="#777" stroke-width=".8"/><path d="M6.200 12.200h2.200" stroke="#d81818" stroke-width="1.300"/><path d="M4.600 12.200h1M9.200 12.200h2.600" stroke="#d0d0d0" stroke-width=".9"/></svg><div class="t" style="left:66px;top:360.5px;font-size:12.4px;letter-spacing:-0.305px;">.bss_etsc_app</div><svg style="left:38px;top:379.3px" width="16" height="16" viewBox="0 0 16 16"><path d="M1.200 1.200h9.800l3.600 3.400V13.600a1.200 1.200 0 0 1-1.200 1.200H2.400a1.200 1.200 0 0 1-1.200-1.200z" fill="#fff" stroke="#000" stroke-width="1.100"/><path d="M2.400 14.900h11a1.300 1.300 0 0 0 1.300-1.300V5.600" fill="none" stroke="#000" stroke-width="1.500"/><path d="M11 1.200v3.400h3.600" fill="none" stroke="#000" stroke-width=".9"/><path d="M3.400 3.800h2.800" stroke="#8a8a20" stroke-width="1.100"/><path d="M5.400 4.800h4.600" stroke="#9a9a9a" stroke-width="1.100"/><path d="M3.400 6.800h2.600" stroke="#8a8a20" stroke-width="1.100"/><path d="M9.800 6.800h2" stroke="#c06a10" stroke-width="1.100"/><path d="M4.600 8.400h7" stroke="#8c8c8c" stroke-width="1.500"/><path d="M4 10h4.600" stroke="#bdbdbd" stroke-width="1"/><path d="M11.400 9.400l1.200 1" stroke="#777" stroke-width=".8"/><path d="M6.200 12.200h2.200" stroke="#d81818" stroke-width="1.300"/><path d="M4.600 12.200h1M9.200 12.200h2.600" stroke="#d0d0d0" stroke-width=".9"/></svg><div class="t" style="left:66px;top:378.5px;font-size:12.4px;letter-spacing:-0.199px;">.bss_uart_app</div><svg style="left:38px;top:397.3px" width="16" height="16" viewBox="0 0 16 16"><path d="M1.200 1.200h9.800l3.600 3.400V13.600a1.200 1.200 0 0 1-1.200 1.200H2.400a1.200 1.200 0 0 1-1.200-1.200z" fill="#fff" stroke="#000" stroke-width="1.100"/><path d="M2.400 14.900h11a1.300 1.300 0 0 0 1.300-1.300V5.600" fill="none" stroke="#000" stroke-width="1.500"/><path d="M11 1.200v3.400h3.600" fill="none" stroke="#000" stroke-width=".9"/><path d="M3.400 3.800h2.800" stroke="#8a8a20" stroke-width="1.100"/><path d="M5.400 4.800h4.600" stroke="#9a9a9a" stroke-width="1.100"/><path d="M3.400 6.800h2.600" stroke="#8a8a20" stroke-width="1.100"/><path d="M9.800 6.800h2" stroke="#c06a10" stroke-width="1.100"/><path d="M4.600 8.400h7" stroke="#8c8c8c" stroke-width="1.500"/><path d="M4 10h4.600" stroke="#bdbdbd" stroke-width="1"/><path d="M11.400 9.400l1.200 1" stroke="#777" stroke-width=".8"/><path d="M6.200 12.200h2.200" stroke="#d81818" stroke-width="1.300"/><path d="M4.600 12.200h1M9.200 12.200h2.600" stroke="#d0d0d0" stroke-width=".9"/></svg><div class="t" style="left:66px;top:396.5px;font-size:12.4px;letter-spacing:-0.282px;">.bss_gpio_app</div><svg style="left:38px;top:415.3px" width="16" height="16" viewBox="0 0 16 16"><path d="M1.200 1.200h9.800l3.600 3.400V13.600a1.200 1.200 0 0 1-1.200 1.200H2.400a1.200 1.200 0 0 1-1.200-1.200z" fill="#fff" stroke="#000" stroke-width="1.100"/><path d="M2.400 14.900h11a1.300 1.300 0 0 0 1.300-1.300V5.600" fill="none" stroke="#000" stroke-width="1.500"/><path d="M11 1.200v3.400h3.600" fill="none" stroke="#000" stroke-width=".9"/><path d="M3.400 3.800h2.800" stroke="#8a8a20" stroke-width="1.100"/><path d="M5.400 4.800h4.600" stroke="#9a9a9a" stroke-width="1.100"/><path d="M3.400 6.800h2.600" stroke="#8a8a20" stroke-width="1.100"/><path d="M9.800 6.800h2" stroke="#c06a10" stroke-width="1.100"/><path d="M4.600 8.400h7" stroke="#8c8c8c" stroke-width="1.500"/><path d="M4 10h4.600" stroke="#bdbdbd" stroke-width="1"/><path d="M11.400 9.400l1.200 1" stroke="#777" stroke-width=".8"/><path d="M6.200 12.200h2.200" stroke="#d81818" stroke-width="1.300"/><path d="M4.600 12.200h1M9.200 12.200h2.600" stroke="#d0d0d0" stroke-width=".9"/></svg><div class="t" style="left:66px;top:414.5px;font-size:12.4px;letter-spacing:-0.120px;">.stack_pro</div><svg style="left:38px;top:433.3px" width="16" height="16" viewBox="0 0 16 16"><path d="M1.200 1.200h9.800l3.600 3.400V13.600a1.200 1.200 0 0 1-1.200 1.200H2.400a1.200 1.200 0 0 1-1.200-1.200z" fill="#fff" stroke="#000" stroke-width="1.100"/><path d="M2.400 14.900h11a1.300 1.300 0 0 0 1.300-1.300V5.600" fill="none" stroke="#000" stroke-width="1.500"/><path d="M11 1.200v3.400h3.600" fill="none" stroke="#000" stroke-width=".9"/><path d="M3.400 3.800h2.800" stroke="#8a8a20" stroke-width="1.100"/><path d="M5.400 4.800h4.600" stroke="#9a9a9a" stroke-width="1.100"/><path d="M3.400 6.800h2.600" stroke="#8a8a20" stroke-width="1.100"/><path d="M9.800 6.800h2" stroke="#c06a10" stroke-width="1.100"/><path d="M4.600 8.400h7" stroke="#8c8c8c" stroke-width="1.500"/><path d="M4 10h4.600" stroke="#bdbdbd" stroke-width="1"/><path d="M11.400 9.400l1.200 1" stroke="#777" stroke-width=".8"/><path d="M6.200 12.200h2.200" stroke="#d81818" stroke-width="1.300"/><path d="M4.600 12.200h1M9.200 12.200h2.600" stroke="#d0d0d0" stroke-width=".9"/></svg><div class="t" style="left:66px;top:432.5px;font-size:12.4px;letter-spacing:-0.246px;">.bss_xtos_pro</div><svg style="left:38px;top:451.3px" width="16" height="16" viewBox="0 0 16 16"><path d="M1.200 1.200h9.800l3.600 3.400V13.600a1.200 1.200 0 0 1-1.200 1.200H2.400a1.200 1.200 0 0 1-1.200-1.200z" fill="#fff" stroke="#000" stroke-width="1.100"/><path d="M2.400 14.900h11a1.300 1.300 0 0 0 1.300-1.300V5.600" fill="none" stroke="#000" stroke-width="1.500"/><path d="M11 1.200v3.400h3.600" fill="none" stroke="#000" stroke-width=".9"/><path d="M3.400 3.800h2.800" stroke="#8a8a20" stroke-width="1.100"/><path d="M5.400 4.800h4.600" stroke="#9a9a9a" stroke-width="1.100"/><path d="M3.400 6.800h2.600" stroke="#8a8a20" stroke-width="1.100"/><path d="M9.800 6.800h2" stroke="#c06a10" stroke-width="1.100"/><path d="M4.600 8.400h7" stroke="#8c8c8c" stroke-width="1.500"/><path d="M4 10h4.600" stroke="#bdbdbd" stroke-width="1"/><path d="M11.400 9.400l1.200 1" stroke="#777" stroke-width=".8"/><path d="M6.200 12.200h2.200" stroke="#d81818" stroke-width="1.300"/><path d="M4.600 12.200h1M9.200 12.200h2.600" stroke="#d0d0d0" stroke-width=".9"/></svg><div class="t" style="left:66px;top:450.5px;font-size:12.4px;letter-spacing:-0.246px;">.bss_etsc_pro</div><div style="left:299px;top:108px;width:15px;height:360px;background:linear-gradient(135deg,#fafbfc,#e3e5ea)"></div><div style="left:299px;top:126px;width:15px;height:324px;background:linear-gradient(to right,#86878c 0%,#aeafb4 30%,#cdcfd5 60%,#d9dce3 88%);border-radius:0 0px 11px 0"></div><div style="left:299px;top:438px;width:15px;height:12px;background:linear-gradient(to bottom,rgba(70,72,80,0),rgba(70,72,80,.55));border-radius:0 0 11px 0"></div><svg style="left:302px;top:112.5px" width="9" height="9" viewBox="0 0 9 9"><path d="M4.500 1L8.500 8H.5z" fill="#3c3c3c"/></svg><svg style="left:302px;top:454.5px" width="9" height="9" viewBox="0 0 9 9"><path d="M.5 1h8L4.500 8z" fill="#3c3c3c"/></svg><div style="left:299px;top:126px;width:14px;height:87px;border:1px solid #17365c;border-left:none;border-radius:0 10px 10px 0/0 13px 13px 0;background:linear-gradient(to right,#dbe6f1 0%,#a9c1dc 25%,#c3d7ea 60%,#e8f4fb 100%)"></div><div style="left:5px;top:468px;width:294px;height:15px;background:linear-gradient(135deg,#fafbfc,#e3e5ea)"></div><div style="left:21px;top:468px;width:262px;height:15px;background:linear-gradient(to bottom,#86878c 0%,#aeafb4 30%,#cdcfd5 60%,#d9dce3 88%);border-radius:0 0 11px 11px"></div><div style="left:21px;top:468px;width:12px;height:15px;background:linear-gradient(to left,rgba(70,72,80,0),rgba(70,72,80,.55));border-radius:0 0 0 11px"></div><div style="left:271px;top:468px;width:12px;height:15px;background:linear-gradient(to right,rgba(70,72,80,0),rgba(70,72,80,.55));border-radius:0 0 11px 0"></div><svg style="left:8.5px;top:471px" width="9" height="9" viewBox="0 0 9 9"><path d="M1 4.500L8 .5v8z" fill="#3c3c3c"/></svg><svg style="left:286.5px;top:471px" width="9" height="9" viewBox="0 0 9 9"><path d="M1 .5l7 4-7 4z" fill="#3c3c3c"/></svg><div style="left:22px;top:468px;width:212px;height:14px;border:1px solid #17365c;border-top:none;border-radius:0 0 13px 13px/0 0 11px 11px;background:linear-gradient(to bottom,#dbe6f1 0%,#a9c1dc 25%,#c3d7ea 60%,#e8f4fb 100%)"></div><div style="left:299px;top:468px;width:15px;height:15px;background:#d6d9e0"></div><div style="left:3px;top:486px;width:314px;height:2px;background:#1d2f4c"></div><div style="left:3px;top:488px;width:314px;height:2px;background:#bdd5ec"></div><div style="left:3px;top:490px;width:314px;height:1px;background:#8fa2b8"></div><div style="left:12px;top:490px;width:118px;height:23px;border:1px solid #2b4a6e;border-top:none;border-radius:0 0 7px 7px;background:linear-gradient(#e8eff7,#c5d6e8 60%,#b6cbe2)"></div><div class="t" style="left:25px;top:492.5px;font-size:12.6px;letter-spacing:-0.002px;">Program Tree</div><svg style="left:109px;top:496px" width="9" height="9" viewBox="0 0 9 9"><path d="M1.500 1.500l6 6M7.500 1.500l-6 6" stroke="#111" stroke-width="1.500"/></svg><div style="left:0px;top:517.5px;width:319px;height:1.5px;background:#74777f"></div><div style="left:2px;top:525px;width:315px;height:24px;background:linear-gradient(to right,#afafaf 0px,#a8a8a8 75px,#b3b3b5 40%,#cfd2d8 80%,#d6d9e0 100%);border:1px solid #85888f;border-top-color:#7f8187;border-left-color:#8f9299"></div><svg style="left:5.5px;top:529px" width="15" height="15" viewBox="0 0 16 16"><path d="M5.800 .6h3l1.600 1.600v3.600H5.800z" fill="#fbfbfb" stroke="#9a9a9a" stroke-width=".8"/><path d="M8 5.800v2.200M2.800 10.200V8h10.400v2.200M8 8v2.200" stroke="#8a8a8a" stroke-width="1.100" fill="none"/><g stroke="#9a9a9a" stroke-width=".8" fill="#fbfbfb"><rect x=".8" y="10" width="4" height="5.400"/><rect x="6" y="10" width="4" height="5.400"/><rect x="11.200" y="10" width="4" height="5.400"/></g><rect x="1.800" y="12.200" width="2" height="2.400" fill="#5a9ef0"/><rect x="7" y="12.200" width="2" height="2.400" fill="#f08a3a"/><rect x="12.200" y="12.200" width="2" height="2.400" fill="#6acc6a"/></svg><div class="t" style="left:25px;top:528.8px;font-size:12.4px;letter-spacing:-0.055px;">Symbol Tree</div><svg style="left:228px;top:529px" width="16" height="16" viewBox="0 0 16 16"><path d="M1 8h13.4v7H1z" fill="#b8b8b8" stroke="#a6a6a6" stroke-width=".8"/><path d="M3.4 12.4l6-7.2 1.4-3.6c1.6.2 2.6 1.2 2.8 2.8l-3.2 1.8-5 6.8z" fill="#a9a9a9" stroke="#9c9c9c" stroke-width=".5"/></svg><svg style="left:251px;top:529px" width="16" height="16" viewBox="0 0 16 16"><rect x="3.4" y="8" width="11.6" height="7" fill="#fff" stroke="#777" stroke-width=".9"/><rect x="3.4" y="7.2" width="11.6" height="1.2" fill="#2f7df0"/><path d="M5 10.6h3.4M9.8 10.6h3.6M5 12.8h3.4M9.8 12.8h3.6" stroke="#bbb" stroke-width=".9"/><path d="M1 2.2h4.4c2.2 0 3.6 1 3.6 3" stroke="#00c800" stroke-width="1.9" fill="none"/><path d="M1 1.2h5" stroke="#000" stroke-width=".8"/><path d="M5.8 5.2h6.4L9 9z" fill="#00c800" stroke="#000" stroke-width=".5"/></svg><svg style="left:272.75px;top:528.75px" width="16.5" height="16.5" viewBox="0 0 16 16"><rect x=".8" y="4" width="14.4" height="10.6" rx="1.4" fill="#2a2a2a" stroke="#000" stroke-width=".6"/><rect x="4.6" y="1.2" width="6.8" height="3.6" rx=".8" fill="#3a3a3a" stroke="#000" stroke-width=".6"/><rect x="5.8" y="2" width="4.4" height="1.6" fill="#ddd"/><rect x="1.6" y="5.2" width="12.8" height="1.6" fill="#8a8a8a"/><circle cx="8" cy="10" r="3.6" fill="#555" stroke="#bbb" stroke-width=".9"/><circle cx="8" cy="10" r="1.9" fill="#111"/><circle cx="7.2" cy="9.2" r=".7" fill="#ccc"/></svg><div style="left:292px;top:528px;width:1px;height:18px;background:#a0a3ab"></div><svg style="left:297.5px;top:529.5px" width="15" height="15" viewBox="0 0 16 16"><path d="M3.2 3.2L12.8 12.8M12.8 3.2L3.2 12.8" stroke="#000" stroke-width="2.3" fill="none"/></svg><div style="left:3px;top:549px;width:314px;height:371px;background:#d6d9e0"></div><div style="left:4px;top:551px;width:312px;height:366px;background:#fff;border:1px solid #9a9da5"></div><svg style="left:8px;top:557.500px" width="10" height="9" viewBox="0 0 10 9"><path d="M1.200 1.500h6.800L4.600 8z" fill="#666"/></svg><svg style="left:21px;top:554px" width="16" height="16" viewBox="0 0 16 16"><path d="M.8 2.600a1 1 0 0 1 1-1h3.800l1.400 1.800h6.200a1 1 0 0 1 1 1V13.400a.8.800 0 0 1-.8.800H1.600a.8.800 0 0 1-.8-.8z" fill="#caa91a" stroke="#86690a" stroke-width=".9"/><path d="M4.200 6.400h11.200L12.600 14.200H1.200z" fill="#f6e478" stroke="#86690a" stroke-width=".9" stroke-linejoin="round"/><path d="M4.800 7.300h9.400" stroke="#fdf8c8" stroke-width=".8"/></svg><svg style="left:35px;top:555px" width="10" height="13" viewBox="0 0 10 13"><path d="M2.5 2.500h7v10h-7z" fill="#fff" stroke="#777" stroke-width=".8"/><path d="M.8 .8h6.400v9.400H.8z" fill="#fff" stroke="#888" stroke-width=".8"/><text x="4" y="8" text-anchor="middle" font-family="Liberation Serif" font-style="italic" font-weight="bold" font-size="9" fill="#e01010">f</text></svg><div class="t" style="left:49px;top:553.5px;font-size:12.4px;letter-spacing:-0.196px;">Functions</div><svg style="left:24px;top:578px" width="10" height="9" viewBox="0 0 10 9"><path d="M1.200 1.500h6.800L4.600 8z" fill="#666"/></svg><svg style="left:37px;top:574px" width="16" height="16" viewBox="0 0 16 16"><path d="M.8 2.600a1 1 0 0 1 1-1h3.800l1.400 1.800h6.200a1 1 0 0 1 1 1V13.400a.8.800 0 0 1-.8.800H1.600a.8.800 0 0 1-.8-.8z" fill="#caa91a" stroke="#86690a" stroke-width=".9"/><path d="M4.200 6.400h11.200L12.600 14.200H1.200z" fill="#f6e478" stroke="#86690a" stroke-width=".9" stroke-linejoin="round"/><path d="M4.800 7.300h9.400" stroke="#fdf8c8" stroke-width=".8"/></svg><svg style="left:50px;top:576px" width="11" height="10" viewBox="0 0 11 10"><rect x="1" y="3.500" width="9" height="5.500" fill="#8a5a2a" stroke="#5a3a1a" stroke-width=".7"/><path d="M3.500 3.500V1.800h4v1.700" stroke="#5a3a1a" stroke-width=".9" fill="none"/><rect x="1" y="5.300" width="9" height="1" fill="#c49a6a"/></svg><div class="t" style="left:65px;top:573.5px;font-size:12.4px;letter-spacing:0.800px;">x</div><div style="left:5px;top:592px;width:310px;height:20px;background:#38678a"></div><svg style="left:40px;top:597px" width="10" height="11" viewBox="0 0 10 11"><path d="M1.500 1l7 4.500-7 4.500z" fill="#fff"/></svg><svg style="left:55px;top:594px" width="12" height="16" viewBox="0 0 12 16"><text x="6" y="12.600" text-anchor="middle" font-family="Liberation Serif" font-style="italic" font-weight="bold" font-size="15.500" fill="#ff10f0" stroke="#c000c0" stroke-width=".9">f</text></svg><div class="t" style="left:81px;top:593.5px;font-size:12.4px;color:#fff;font-weight:bold;letter-spacing:0.017px;">xTaskCreateUniversal</div><div style="left:3px;top:921px;width:314.5px;height:36.5px;background:#d6d9e0;border:solid;border-width:2px 3px 3px 2px;border-color:#8f929a #fbfbfc #fbfbfc #8f929a"></div><div class="t" style="left:8px;top:929.5px;font-size:12.6px;letter-spacing:-0.214px;">Filter:</div><div style="left:45px;top:926px;width:244px;height:25px;background:#ffff00;border:1px solid #c9c94a"></div><div class="t" style="left:49px;top:929.5px;font-size:12.6px;letter-spacing:-0.016px;">xTaskCreateUniv</div><svg style="left:273px;top:933px" width="10" height="10" viewBox="0 0 16 16"><path d="M3.600 3.600l8.800 8.800M12.400 3.600l-8.800 8.800" stroke="#e86a14" stroke-width="3" stroke-linecap="round"/><path d="M3.600 3.600l8.800 8.800M12.400 3.600l-8.800 8.800" stroke="#f59a3a" stroke-width="1.200" stroke-linecap="round"/></svg><svg style="left:295px;top:930.5px" width="16" height="16" viewBox="0 0 16 16"><path d="M2 1h8l3.4 3.4V15H2z" fill="#eaf2fd" stroke="#5a86cc" stroke-width="1"/><path d="M10 1v3.4h3.4" fill="#fff" stroke="#5a86cc" stroke-width=".8"/><path d="M3.6 10.4h4M3.6 12.6h3" stroke="#7aa3e0" stroke-width="1"/><path d="M6.6 10h4.6V7.8l4.4 3.4-4.4 3.4v-2.2H6.6z" fill="#5aa63a" stroke="#3a8222" stroke-width=".6"/></svg><div style="left:0px;top:957.5px;width:319px;height:1.5px;background:#6a6d75"></div><div style="left:2px;top:965px;width:315px;height:24px;background:linear-gradient(to right,#d2d5dc,#d6d9e0);border:1px solid #85888f;border-top-color:#7f8187;border-left-color:#8f9299"></div><svg style="left:4.75px;top:969.25px" width="15.5" height="15.5" viewBox="0 0 16 16"><path d="M.8 3.2h5l1.4 1.6h8v9.8H.8z" fill="#c9a21a" stroke="#7a5e00" stroke-width=".9"/><path d="M.8 6h14.4v8.6H.8z" fill="#e3c23a" stroke="#7a5e00" stroke-width=".9"/><text x="8" y="13.4" text-anchor="middle" font-family="Liberation Sans" font-weight="bold" font-size="8.6" fill="#111">DT</text></svg><div class="t" style="left:25px;top:968.5px;font-size:12.6px;letter-spacing:-0.076px;">Data Ty...</div><svg style="left:85.5px;top:969.5px" width="15" height="15" viewBox="0 0 16 16"><path d="M7.200 1.500L.8 8l6.400 6.500V10.600h8V5.400h-8z" fill="#a6a6a6" stroke="#a0a0a0" stroke-width=".8"/></svg><svg style="left:104.5px;top:972px" width="11" height="11" viewBox="0 0 16 16"><path d="M4.6 6.4h6.8L8 9.8z" fill="#9c9c9c"/></svg><svg style="left:121.5px;top:969.5px" width="15" height="15" viewBox="0 0 16 16"><path d="M8.8 1.5 L15.2 8 L8.8 14.5 V10.6 H0.8 V5.4 H8.8z" fill="#a6a6a6" stroke="#a0a0a0" stroke-width=".8"/></svg><svg style="left:140.5px;top:972px" width="11" height="11" viewBox="0 0 16 16"><path d="M4.6 6.4h6.8L8 9.8z" fill="#9c9c9c"/></svg><div style="left:160px;top:969px;width:1px;height:17px;background:#a0a3ab"></div><svg style="left:169px;top:969.5px" width="15" height="15" viewBox="0 0 16 16"><path d="M3 3.400v8.800h7" stroke="#f08020" stroke-width="1.500" fill="none"/><path d="M3 .8l2.400 2.400L3 5.600.6 3.200z" fill="#1a3ae0"/><path d="M12.200 .8l2.400 2.400-2.400 2.400-2.400-2.400z" fill="#111"/><path d="M12.200 9.600l2.600 2.600-2.600 2.600-2.600-2.600z" fill="#22a83a"/><path d="M6.400 10l2.600 2.200-2.600 2.200z" fill="#f08020"/></svg><svg style="left:188px;top:971.5px" width="12" height="12" viewBox="0 0 16 16"><path d="M4.6 6.2h6.8L8 9.8z" fill="#000"/></svg><div style="left:208px;top:969px;width:1px;height:17px;background:#a0a3ab"></div><svg style="left:216.75px;top:968.75px" width="16.5" height="16.5" viewBox="0 0 16 16"><path d="M8 .8l1.6 1.2 2-.4.8 1.8 1.8.8-.4 2L15.2 8 14 9.600l.4 2-1.800.8-.8 1.800-2-.4L8 15.200l-1.600-1.200-2 .4-.8-1.800-1.800-.8.4-2L.8 8 2 6.400l-.4-2 1.800-.8.8-1.800 2 .4z" fill="#8c8cc4" stroke="#5a5a9a" stroke-width=".8"/><circle cx="8" cy="8" r="3" fill="#d9dbe4" stroke="#5a5a9a" stroke-width=".7"/><path d="M3.6 11.6L12.800 4" stroke="#c6c8e6" stroke-width="1.4" opacity=".8"/></svg><div style="left:242px;top:969px;width:1px;height:17px;background:#a0a3ab"></div><svg style="left:250.75px;top:968.75px" width="16.5" height="16.5" viewBox="0 0 16 16"><rect x="1" y="1" width="10.400" height="10.400" fill="#e9edf4" stroke="#5a5a5a" stroke-width=".9"/><rect x="4" y="4" width="11" height="11" fill="#f4f6fa" stroke="#3a3a3a" stroke-width=".9"/><path d="M6.200 9.600h6.600" stroke="#2a5ab8" stroke-width="1.700"/></svg><div style="left:271px;top:969px;width:1px;height:17px;background:#a0a3ab"></div><svg style="left:275.5px;top:970px" width="15" height="15" viewBox="0 0 16 16"><path d="M3.6 6h8.8L8 10.6z" fill="#000"/></svg><svg style="left:297.5px;top:969.5px" width="15" height="15" viewBox="0 0 16 16"><path d="M3.2 3.2L12.8 12.8M12.8 3.2L3.2 12.8" stroke="#000" stroke-width="2.3" fill="none"/></svg><div style="left:3px;top:989px;width:314px;height:34px;background:#d6d9e0"></div><div style="left:4px;top:992px;width:311px;height:27px;background:#fff;border:1px solid #9a9da5"></div><svg style="left:24px;top:998px" width="10" height="11" viewBox="0 0 10 11"><path d="M1.500 1l7 4.500-7 4.500z" fill="#6a6a6a"/></svg><svg style="left:38px;top:996.5px" width="15" height="15" viewBox="0 0 16 16"><path d="M2.4 2.2L9.6 .8l4.2 1.4v11.4L6.6 15.2 2.4 13.6z" fill="#e8801a" stroke="#a8540a" stroke-width=".7"/><path d="M6.6 3.6v11.6" stroke="#a8540a" stroke-width=".8"/><path d="M2.4 2.2l4.2 1.4 7.2-1.4" stroke="#f6b060" stroke-width=".9" fill="none"/><path d="M8 6l4.4-.9M8 8.4l4.4-.9M8 10.8l4.4-.9" stroke="#fbe0c0" stroke-width="1.2"/></svg><div class="t" style="left:64px;top:996px;font-size:12.6px;letter-spacing:-0.053px;">BuiltInTypes</div><svg style="left:40px;top:1015px" width="12" height="4" viewBox="0 0 12 4"><path d="M1 4c1-2.500 3-3.500 5.500-3.500S10 1.500 11 3" stroke="#e02020" stroke-width="1.200" fill="none"/></svg><div style="left:298px;top:993px;width:15px;height:25px;background:linear-gradient(to right,#c3c4ca,#e4e5ea)"></div><div style="left:298px;top:993px;width:15px;height:8px;background:#eef0f4"></div><svg style="left:301px;top:994px" width="9" height="6" viewBox="0 0 9 6"><path d="M4.500 .8L8 5H1z" fill="#4a4a4a"/></svg><div style="left:298px;top:1001px;width:14px;height:8px;background:#c6c7cc;border-radius:0 5px 5px 0"></div><div style="left:298px;top:1010px;width:15px;height:8px;background:#eef0f4"></div><svg style="left:301px;top:1011px" width="9" height="6" viewBox="0 0 9 6"><path d="M1 1h7L4.500 5.200z" fill="#4a4a4a"/></svg><div style="left:3px;top:1023px;width:314.5px;height:37px;background:#d6d9e0;border:solid;border-width:2px 3px 3px 2px;border-color:#8f929a #fbfbfc #fbfbfc #8f929a"></div><div class="t" style="left:8px;top:1031.5px;font-size:12.6px;letter-spacing:-0.214px;">Filter:</div><div style="left:45px;top:1028px;width:243px;height:25px;background:#fff;border:1px solid #b4b7be"></div><svg style="left:295px;top:1032px" width="16" height="16" viewBox="0 0 16 16"><path d="M3 1h8l3.4 3.4V15H3z" fill="#eaf2fd" stroke="#5a86cc" stroke-width="1"/><path d="M11 1v3.4h3.4" fill="#fff" stroke="#5a86cc" stroke-width=".8"/><path d="M4.4 6.2L.8 9l3.6 2.8M6.4 6.2L10 9l-3.6 2.8" stroke="#3a86e8" stroke-width="1.6" fill="none"/><path d="M10.4 11h3" stroke="#7aa3e0" stroke-width="1"/></svg><div style="left:0px;top:1060px;width:319px;height:1.7px;background:#6a6d75"></div><div style="left:323px;top:79px;width:1126px;height:2px;background:#fbfbfc"></div><div style="left:323px;top:81px;width:2px;height:698px;background:#fbfbfc"></div><div style="left:325px;top:81px;width:1123px;height:24px;background:linear-gradient(to right,#adadad 0px,#aaaaab 19%,#b6b6b8 42%,#c7c8cb 61%,#d0d2d6 77%,#d8dbe2 100%);border:1px solid #85888f;border-top-color:#7f8187;border-left-color:#8f9299"></div><svg style="left:330px;top:86px" width="14" height="14" viewBox="0 0 16 16"><rect x="1" y="2.6" width="14" height="11" fill="#e9ece9" stroke="#222" stroke-width="1.1"/><rect x="1.4" y="3" width="2.2" height="10.2" fill="#111"/><g fill="#fff"><rect x="2" y="4" width="1" height="1"/><rect x="2" y="6" width="1" height="1"/><rect x="2" y="8" width="1" height="1"/><rect x="2" y="10" width="1" height="1"/><rect x="2" y="12" width="1" height="1"/></g><rect x="5" y="4" width="9" height="3" fill="#5b7fb5"/><rect x="5" y="8.4" width="9" height="2.2" fill="#9ec79e"/><rect x="5" y="11.2" width="9" height="1.4" fill="#c7dcc7"/></svg><div class="t" style="left:348px;top:84.5px;font-size:12.4px;letter-spacing:0.005px;">Listing:  project.ino.bin</div><svg style="left:1210px;top:85px" width="16" height="16" viewBox="0 0 16 16"><path d="M1 1h6.400l2.400 2.400V10.400H1z" fill="#f4f4f4" stroke="#b0b0b0" stroke-width=".9"/><path d="M6.200 5h6.200l2.600 2.600V15H6.200z" fill="#fcfcfc" stroke="#b0b0b0" stroke-width=".9"/><path d="M12.400 5v2.600H15" fill="none" stroke="#b0b0b0" stroke-width=".7"/></svg><svg style="left:1231.5px;top:84.5px" width="17" height="17" viewBox="0 0 16 16"><rect x="1" y="2.4" width="11" height="12.6" rx="1" fill="#d8a860" stroke="#9a6a2a" stroke-width=".9"/><rect x="4" y="1" width="5" height="2.8" rx=".8" fill="#b9b9b9" stroke="#777" stroke-width=".6"/><path d="M6 6h6.6l2.4 2.4V15.4H6z" fill="#e6effc" stroke="#5a86cc" stroke-width=".9"/></svg><div style="left:1257px;top:84px;width:1px;height:18px;background:#a0a3ab"></div><div style="left:1264px;top:82px;width:21px;height:22px;background:linear-gradient(#f4f5f8,#e2e4ea);border:1px solid #8d9097;border-right-color:#c9ccd2;border-bottom-color:#c9ccd2"></div><svg style="left:1267px;top:85.5px" width="16" height="16" viewBox="0 0 16 16"><path d="M3 1l.2 11 2.6-2.4 2 4.6 1.8-.8-2-4.4 3.4-.2z" fill="#fff" stroke="#000" stroke-width="1"/><rect x="8.6" y="11" width="6" height="3.8" fill="#f3d34a" stroke="#c9a21a" stroke-width=".5"/></svg><div style="left:1291px;top:84px;width:1px;height:18px;background:#a0a3ab"></div><svg style="left:1300px;top:85px" width="16" height="16" viewBox="0 0 16 16"><rect x="1" y="1.4" width="14" height="8.4" fill="#fff" stroke="#444" stroke-width=".9"/><path d="M1 4.2h14M1 7h14M5.6 1.4v2.8M10.4 1.4v2.8M8 4.2V7" stroke="#444" stroke-width=".8"/><rect x="2" y="4.8" width="5.4" height="1.6" fill="#f0a030"/><path d="M8 10v3" stroke="#222" stroke-width="1.4"/><path d="M5.2 12.2h5.6L8 15.4z" fill="#222"/></svg><svg style="left:1322px;top:85px" width="16" height="16" viewBox="0 0 16 16"><path d="M2 1v14M5 1v14" stroke="#4a86d8" stroke-width="1.3"/><path d="M1 4h5M1 8h5M1 12h5" stroke="#9dbbe8" stroke-width="1"/><path d="M12.4 6v9M15 6v9" stroke="#4a86d8" stroke-width="1.1"/><path d="M5.6 10.4l2.8 3L15.2 3" stroke="#4cae3a" stroke-width="2.2" fill="none"/></svg><div style="left:1347px;top:84px;width:1px;height:18px;background:#a0a3ab"></div><svg style="left:1354.5px;top:84.5px" width="17" height="17" viewBox="0 0 16 16"><rect x=".8" y="4" width="14.4" height="10.6" rx="1.4" fill="#2a2a2a" stroke="#000" stroke-width=".6"/><rect x="4.6" y="1.2" width="6.8" height="3.6" rx=".8" fill="#3a3a3a" stroke="#000" stroke-width=".6"/><rect x="5.8" y="2" width="4.4" height="1.6" fill="#ddd"/><rect x="1.6" y="5.2" width="12.8" height="1.6" fill="#8a8a8a"/><circle cx="8" cy="10" r="3.6" fill="#555" stroke="#bbb" stroke-width=".9"/><circle cx="8" cy="10" r="1.9" fill="#111"/><circle cx="7.2" cy="9.2" r=".7" fill="#ccc"/></svg><div style="left:1381px;top:84px;width:1px;height:18px;background:#a0a3ab"></div><svg style="left:1390px;top:85px" width="16" height="16" viewBox="0 0 16 16"><rect x="1" y="1.6" width="11" height="13" fill="#fff" stroke="#8a8a8a" stroke-width=".9"/><rect x="2.6" y="3.6" width="6" height="3.4" fill="#bcd2f2" stroke="#5a86cc" stroke-width=".6"/><path d="M2.6 9h6M2.6 11h6M2.6 13h4" stroke="#aaa" stroke-width=".9"/><rect x="10.6" y=".8" width="4.2" height="14.4" fill="#f0c24a" stroke="#b98a1a" stroke-width=".7"/><path d="M10.6 3h2M10.6 5.4h2M10.6 7.8h2M10.6 10.2h2M10.6 12.6h2" stroke="#7a5a00" stroke-width=".7"/></svg><svg style="left:1410.5px;top:88px" width="11" height="11" viewBox="0 0 16 16"><path d="M4.6 6.2h6.8L8 9.8z" fill="#000"/></svg><div style="left:1424px;top:84px;width:1px;height:18px;background:#a0a3ab"></div><svg style="left:1427.5px;top:85.5px" width="15" height="15" viewBox="0 0 16 16"><path d="M3.2 3.2L12.8 12.8M12.8 3.2L3.2 12.8" stroke="#000" stroke-width="2.3" fill="none"/></svg><div style="left:325px;top:105px;width:1125px;height:673px;background:#d6d9e0;border-right:2px solid #8e9199;border-bottom:2px solid #8a8d95"></div><div style="left:1448px;top:79px;width:2px;height:28px;background:#8e9199"></div><div style="left:1445px;top:107px;width:1px;height:666px;background:#b4b7bf"></div><div style="left:326px;top:107px;width:1120px;height:1px;background:#b4b7bf"></div><div style="left:326px;top:107px;width:15px;height:667px;background:#d6d9e0"></div><div style="left:332px;top:108px;width:3px;height:650px;background:#a9a9a9"></div><div style="left:341px;top:107px;width:70px;height:667px;background:#fff"></div><div style="left:411px;top:107px;width:7px;height:667px;background:linear-gradient(to right,#cfd3db,#e6e8ee 50%,#d2d6de)"></div><div style="left:412px;top:430px;width:3px;height:17px;border:1px solid #b0b3bb;border-radius:2px;background:#e8eaef"></div><div style="left:417px;top:107px;width:965px;height:651px;background:#fff;border-left:1px solid #7f828a;border-top:1px solid #9a9da5"></div><div style="left:419px;top:433px;width:963px;height:37px;background:#edf5fd"></div><svg style="left:341px;top:107px" width="70" height="667" viewBox="0 0 70 667"><g fill="none" stroke="#bdbdbd" stroke-width="1">
<path d="M58.500 12V172.500H70"/>
<path d="M70 82.500H34.500V226.500H64" stroke-dasharray="6 4"/>
<path d="M64 118.500H46.500V316.500H70"/>
<path d="M70 442.500H58.500V496.500H64" stroke-dasharray="6 4"/>
</g><g fill="#c6c6c6"><path d="M58.500 2l4 8h-8z"/><path d="M61 114.500l8 4-8 4z"/><path d="M61 222.500l8 4-8 4z"/><path d="M62 493l7 3.500-7 3.500z"/><path d="M54.500 643h8l-4 7z"/></g>
<rect x="40" y="3" width="1" height="1" fill="#ccc"/></svg><svg style="left:326.5px;top:291px" width="13" height="13" viewBox="0 0 16 16"><path d="M3 3L13 13M13 3L3 13" stroke="#9a1010" stroke-width="3.600" stroke-linecap="round"/><path d="M3 3L13 13M13 3L3 13" stroke="#e83030" stroke-width="2.200" stroke-linecap="round"/></svg><svg style="left:326.5px;top:471px" width="13" height="13" viewBox="0 0 16 16"><path d="M3 3L13 13M13 3L3 13" stroke="#9a1010" stroke-width="3.600" stroke-linecap="round"/><path d="M3 3L13 13M13 3L3 13" stroke="#e83030" stroke-width="2.200" stroke-linecap="round"/></svg><svg style="left:326px;top:450px" width="16" height="12" viewBox="0 0 16 12"><path d="M0 6h13" stroke="#000" stroke-width="1.300"/><path d="M10 1.500L15 6l-5 4.500z" fill="#000"/></svg><div class="m" style="left:475px;top:110px;color:#000;">400d4f3b</div><div class="m" style="left:538px;top:110px;color:#0000ff;">bd 03</div><div class="m" style="left:648px;top:110px;color:#000080;">mov.n</div><div class="m" style="left:728px;top:110px;color:#000;"><span style="color:#808000">a11</span><span style="color:#000">,</span><span style="color:#808000">a3</span></div><div class="m" style="left:475px;top:128px;color:#000;">400d4f3d</div><div class="m" style="left:538px;top:128px;color:#0000ff;">e5 02 08</div><div class="m" style="left:648px;top:128px;color:#000080;">call8</div><div class="m" style="left:728px;top:128px;color:#000;"><span style="color:#0000ff">uart_set_rx_timeout</span></div><div class="m" style="left:1068px;top:128px;color:#c0c0c0;">undefined uart_set_rx_timeout()</div><div class="m" style="left:475px;top:146px;color:#000;">400d4f40</div><div class="m" style="left:538px;top:146px;color:#0000ff;">7d 0a</div><div class="m" style="left:648px;top:146px;color:#000080;">mov.n</div><div class="m" style="left:728px;top:146px;color:#000;"><span style="color:#808000">a7</span><span style="color:#000">,</span><span style="color:#808000">a10</span></div><div class="m" style="left:475px;top:164px;color:#000;">400d4f42</div><div class="m" style="left:538px;top:164px;color:#0000ff;">a8 02</div><div class="m" style="left:648px;top:164px;color:#000080;">l32i.n</div><div class="m" style="left:728px;top:164px;color:#000;"><span style="color:#808000">a10</span><span style="color:#000">,</span><span style="color:#808000">a2</span><span style="color:#000">,</span><span style="color:#008000">0x0</span></div><div class="m" style="left:475px;top:182px;color:#000;">400d4f44</div><div class="m" style="left:538px;top:182px;color:#0000ff;">cc 8a</div><div class="m" style="left:648px;top:182px;color:#000080;">bnez.n</div><div class="m" style="left:728px;top:182px;color:#000;"><span style="color:#808000">a10</span><span style="color:#000">,</span><span style="color:#0000ff">LAB_400d4f50</span></div><div class="m" style="left:618px;top:218px;color:#0000ff;">LAB_400d4f46</div><div class="m" style="left:956px;top:218px;color:#006400;">XREF[1]:</div><div class="m" style="left:1046px;top:218px;color:#006400;">400d4f5c(j)</div><div class="m" style="left:475px;top:236px;color:#000;">400d4f46</div><div class="m" style="left:538px;top:236px;color:#0000ff;">20 f7 40</div><div class="m" style="left:648px;top:236px;color:#000080;">nsau</div><div class="m" style="left:728px;top:236px;color:#000;"><span style="color:#808000">a2</span><span style="color:#000">,</span><span style="color:#808000">a7</span></div><div class="m" style="left:475px;top:254px;color:#000;">400d4f49</div><div class="m" style="left:538px;top:254px;color:#0000ff;">20 25 41</div><div class="m" style="left:648px;top:254px;color:#000080;">srli</div><div class="m" style="left:728px;top:254px;color:#000;"><span style="color:#808000">a2</span><span style="color:#000">,</span><span style="color:#808000">a2</span><span style="color:#000">,</span><span style="color:#008000">0x5</span></div><div class="m" style="left:475px;top:272px;color:#000;">400d4f4c</div><div class="m" style="left:538px;top:272px;color:#0000ff;">86 f3 ff</div><div class="m" style="left:648px;top:272px;color:#000080;">j</div><div class="m" style="left:728px;top:272px;color:#000;"><span style="color:#0000ff">LAB_400d4f1e</span></div><div class="m" style="left:475px;top:290px;color:#000;">400d4f4f</div><div class="m" style="left:538px;top:290px;color:#0000ff;">00</div><div class="m" style="left:648px;top:290px;color:#000080;">??</div><div class="m" style="left:728px;top:290px;color:#000;"><span style="color:#008000">00h</span></div><div class="m" style="left:618px;top:326px;color:#0000ff;">LAB_400d4f50</div><div class="m" style="left:956px;top:326px;color:#006400;">XREF[1]:</div><div class="m" style="left:1046px;top:326px;color:#006400;">400d4f44(j)</div><div class="m" style="left:475px;top:344px;color:#000;">400d4f50</div><div class="m" style="left:538px;top:344px;color:#0000ff;">d2 a0 00</div><div class="m" style="left:648px;top:344px;color:#000080;">movi</div><div class="m" style="left:728px;top:344px;color:#000;"><span style="color:#808000">a13</span><span style="color:#000">,</span><span style="color:#008000">0x0</span></div><div class="m" style="left:475px;top:362px;color:#000;">400d4f53</div><div class="m" style="left:538px;top:362px;color:#0000ff;">c2 a0 00</div><div class="m" style="left:648px;top:362px;color:#000080;">movi</div><div class="m" style="left:728px;top:362px;color:#000;"><span style="color:#808000">a12</span><span style="color:#000">,</span><span style="color:#008000">0x0</span></div><div class="m" style="left:475px;top:380px;color:#000;">400d4f56</div><div class="m" style="left:538px;top:380px;color:#0000ff;">b2 a0 00</div><div class="m" style="left:648px;top:380px;color:#000080;">movi</div><div class="m" style="left:728px;top:380px;color:#000;"><span style="color:#808000">a11</span><span style="color:#000">,</span><span style="color:#008000">0x0</span></div><div class="m" style="left:475px;top:398px;color:#000;">400d4f59</div><div class="m" style="left:538px;top:398px;color:#0000ff;">e5 ad b2</div><div class="m" style="left:648px;top:398px;color:#000080;">call8</div><div class="m" style="left:728px;top:398px;color:#000;"><span style="color:#0000ff">xQueueGenericSend</span></div><div class="m" style="left:1068px;top:398px;color:#c0c0c0;">undefined xQueueGenericSend()</div><div class="m" style="left:475px;top:416px;color:#000;">400d4f5c</div><div class="m" style="left:538px;top:416px;color:#0000ff;">86 f9 ff</div><div class="m" style="left:648px;top:416px;color:#000080;">j</div><div class="m" style="left:728px;top:416px;color:#000;"><span style="color:#0000ff">LAB_400d4f46</span></div><div style="left:618px;top:434px;width:1px;height:17px;background:#f6b4bc"></div><div class="m" style="left:618px;top:434px;color:#808080;">LAB_400d4f5f+1</div><div class="m" style="left:956px;top:434px;color:#006400;">XREF[0,1]:</div><div class="m" style="left:1046px;top:434px;color:#808080;">400d031c(*)</div><div class="m" style="left:475px;top:452px;color:#000;">400d4f5f</div><div class="m" style="left:538px;top:452px;color:#0000ff;">00 36 41</div><div class="m" style="left:648px;top:452px;color:#000080;">srli</div><div class="m" style="left:728px;top:452px;color:#000;"><span style="color:#808000">a3</span><span style="color:#000">,</span><span style="color:#808000">a0</span><span style="color:#000">,</span><span style="color:#008000">0x6</span></div><div class="m" style="left:475px;top:470px;color:#000;">400d4f62</div><div class="m" style="left:538px;top:470px;color:#0000ff;">00</div><div class="m" style="left:648px;top:470px;color:#000080;">??</div><div class="m" style="left:728px;top:470px;color:#000;"><span style="color:#008000">00h</span></div><div class="m" style="left:475px;top:488px;color:#000;">400d4f63</div><div class="m" style="left:538px;top:488px;color:#0000ff;">25 72 1a</div><div class="m" style="left:648px;top:488px;color:#000080;">call8</div><div class="m" style="left:728px;top:488px;color:#000;"><span style="color:#0000ff">FUN_400ef684</span></div><div class="m" style="left:1068px;top:488px;color:#c0c0c0;">undefined FUN_400ef684()</div><div class="m" style="left:475px;top:506px;color:#000;">400d4f66</div><div class="m" style="left:538px;top:506px;color:#0000ff;">25 f0 fd</div><div class="m" style="left:648px;top:506px;color:#000080;">call8</div><div class="m" style="left:728px;top:506px;color:#000;"><span style="color:#0000ff">delay</span></div><div class="m" style="left:1068px;top:506px;color:#c0c0c0;">undefined delay()</div><div class="m" style="left:475px;top:524px;color:#000;">400d4f69</div><div class="m" style="left:538px;top:524px;color:#0000ff;">25 71 1a</div><div class="m" style="left:648px;top:524px;color:#000080;">call8</div><div class="m" style="left:728px;top:524px;color:#000;"><span style="color:#0000ff">FUN_400ef67c</span></div><div class="m" style="left:1068px;top:524px;color:#c0c0c0;">undefined FUN_400ef67c()</div><div class="m" style="left:475px;top:542px;color:#000;">400d4f6c</div><div class="m" style="left:538px;top:542px;color:#0000ff;">8c 1a</div><div class="m" style="left:648px;top:542px;color:#000080;">beqz.n</div><div class="m" style="left:728px;top:542px;color:#000;"><span style="color:#808000">a10</span><span style="color:#000">,</span><span style="color:#0000ff">LAB_400d4f71</span></div><div class="m" style="left:475px;top:560px;color:#000;">400d4f6e</div><div class="m" style="left:538px;top:560px;color:#0000ff;">65 14 00</div><div class="m" style="left:648px;top:560px;color:#000080;">call8</div><div class="m" style="left:728px;top:560px;color:#000;"><span style="color:#0000ff">FUN_400d50b4</span></div><div class="m" style="left:1068px;top:560px;color:#c0c0c0;">undefined FUN_400d50b4()</div><div class="m" style="left:618px;top:596px;color:#0000ff;">LAB_400d4f71</div><div class="m" style="left:956px;top:596px;color:#006400;">XREF[1]:</div><div class="m" style="left:1046px;top:596px;color:#006400;">400d4f6c(j)</div><div class="m" style="left:475px;top:614px;color:#000;">400d4f71</div><div class="m" style="left:538px;top:614px;color:#0000ff;">a1 2c ec</div><div class="m" style="left:648px;top:614px;color:#000080;">l32r</div><div class="m" style="left:728px;top:614px;color:#000;"><span style="color:#808000">a10</span><span style="color:#000">,</span><span style="color:#808080">LAB_400d0023+1</span></div><div class="m" style="left:475px;top:632px;color:#000;">400d4f74</div><div class="m" style="left:538px;top:632px;color:#0000ff;">7c fe</div><div class="m" style="left:648px;top:632px;color:#000080;">movi.n</div><div class="m" style="left:728px;top:632px;color:#000;"><span style="color:#808000">a14</span><span style="color:#000">,</span><span style="color:#008000">0xff</span></div><div class="m" style="left:475px;top:650px;color:#000;">400d4f76</div><div class="m" style="left:538px;top:650px;color:#0000ff;">7c fd</div><div class="m" style="left:648px;top:650px;color:#000080;">movi.n</div><div class="m" style="left:728px;top:650px;color:#000;"><span style="color:#808000">a13</span><span style="color:#000">,</span><span style="color:#008000">0xff</span></div><div class="m" style="left:475px;top:668px;color:#000;">400d4f78</div><div class="m" style="left:538px;top:668px;color:#0000ff;">c2 a0 01</div><div class="m" style="left:648px;top:668px;color:#000080;">movi</div><div class="m" style="left:728px;top:668px;color:#000;"><span style="color:#808000">a12</span><span style="color:#000">,</span><span style="color:#008000">0x1</span></div><div class="m" style="left:475px;top:686px;color:#000;">400d4f7b</div><div class="m" style="left:538px;top:686px;color:#0000ff;">b2 a0 03</div><div class="m" style="left:648px;top:686px;color:#000080;">movi</div><div class="m" style="left:728px;top:686px;color:#000;"><span style="color:#808000">a11</span><span style="color:#000">,</span><span style="color:#008000">0x3</span></div><div class="m" style="left:475px;top:704px;color:#000;">400d4f7e</div><div class="m" style="left:538px;top:704px;color:#0000ff;">e5 88 fd</div><div class="m" style="left:648px;top:704px;color:#000080;">call8</div><div class="m" style="left:728px;top:704px;color:#000;"><span style="color:#0000ff">HardwareSerial.setPins</span></div><div class="m" style="left:1068px;top:704px;color:#c0c0c0;">undefined HardwareSerial.setPins()</div><div class="m" style="left:475px;top:722px;color:#000;">400d4f81</div><div class="m" style="left:538px;top:722px;color:#0000ff;">a5 7c fc</div><div class="m" style="left:648px;top:722px;color:#000080;">call8</div><div class="m" style="left:728px;top:722px;color:#000;"><span style="color:#0000ff">FUN_400d174c</span></div><div class="m" style="left:1068px;top:722px;color:#c0c0c0;">undefined FUN_400d174c()</div><div class="m" style="left:475px;top:740px;color:#000;">400d4f84</div><div class="m" style="left:538px;top:740px;color:#0000ff;">65 6f 1a</div><div class="m" style="left:648px;top:740px;color:#000080;">call8</div><div class="m" style="left:728px;top:740px;color:#000;"><span style="color:#0000ff">FUN_400ef67c</span></div><div class="m" style="left:1068px;top:740px;color:#c0c0c0;">undefined FUN_400ef67c()</div><div style="left:1382px;top:108px;width:15px;height:650px;background:linear-gradient(135deg,#fafbfc,#e3e5ea)"></div><div style="left:1382px;top:125px;width:15px;height:616px;background:linear-gradient(to right,#86878c 0%,#aeafb4 30%,#cdcfd5 60%,#d9dce3 88%);border-radius:0 11px 11px 0"></div><div style="left:1382px;top:125px;width:15px;height:12px;background:linear-gradient(to top,rgba(70,72,80,0),rgba(70,72,80,.55));border-radius:0 11px 0 0"></div><div style="left:1382px;top:729px;width:15px;height:12px;background:linear-gradient(to bottom,rgba(70,72,80,0),rgba(70,72,80,.55));border-radius:0 0 11px 0"></div><svg style="left:1385px;top:112px" width="9" height="9" viewBox="0 0 9 9"><path d="M4.500 1L8.500 8H.5z" fill="#3c3c3c"/></svg><svg style="left:1385px;top:745px" width="9" height="9" viewBox="0 0 9 9"><path d="M.5 1h8L4.500 8z" fill="#3c3c3c"/></svg><div style="left:1382px;top:479px;width:14px;height:27px;border:1px solid #17365c;border-left:none;border-radius:0 10px 10px 0/0 13px 13px 0;background:linear-gradient(to right,#dbe6f1 0%,#a9c1dc 25%,#c3d7ea 60%,#e8f4fb 100%)"></div><div style="left:1382px;top:479px;width:1px;height:27px;background:#5a7494"></div><div style="left:418px;top:758px;width:964px;height:15px;background:linear-gradient(135deg,#fafbfc,#e3e5ea)"></div><div style="left:434px;top:758px;width:932px;height:15px;background:linear-gradient(to bottom,#86878c 0%,#aeafb4 30%,#cdcfd5 60%,#d9dce3 88%);border-radius:0 0 11px 11px"></div><div style="left:434px;top:758px;width:12px;height:15px;background:linear-gradient(to left,rgba(70,72,80,0),rgba(70,72,80,.55));border-radius:0 0 0 11px"></div><div style="left:1354px;top:758px;width:12px;height:15px;background:linear-gradient(to right,rgba(70,72,80,0),rgba(70,72,80,.55));border-radius:0 0 11px 0"></div><svg style="left:421.5px;top:761px" width="9" height="9" viewBox="0 0 9 9"><path d="M1 4.500L8 .5v8z" fill="#3c3c3c"/></svg><svg style="left:1369.5px;top:761px" width="9" height="9" viewBox="0 0 9 9"><path d="M1 .5l7 4-7 4z" fill="#3c3c3c"/></svg><div style="left:434px;top:758px;width:863px;height:14px;border:1px solid #17365c;border-top:none;border-radius:0 0 13px 13px/0 0 11px 11px;background:linear-gradient(to bottom,#dbe6f1 0%,#a9c1dc 25%,#c3d7ea 60%,#e8f4fb 100%)"></div><div style="left:1382px;top:758px;width:15px;height:15px;background:#d6d9e0"></div><svg style="left:1397px;top:125px" width="48" height="612" viewBox="0 0 48 612" shape-rendering="crispEdges"><rect x="7" y="8" width="9" height="28" fill="#a9a9a9"/><rect x="7" y="47" width="9" height="10" fill="#a9a9a9"/><rect x="7" y="60" width="9" height="14" fill="#a9a9a9"/><rect x="7" y="83" width="9" height="11" fill="#a9a9a9"/><rect x="7" y="107" width="9" height="321" fill="#a9a9a9"/><rect x=".6" y="28.5" width="9" height="3.6" fill="#d9c9a4" stroke="#f5a623" stroke-width="1"/><rect x=".6" y="33" width="9" height="3.6" fill="#d9c9a4" stroke="#f5a623" stroke-width="1"/><rect x=".6" y="37" width="9" height="3.6" fill="#d9c9a4" stroke="#f5a623" stroke-width="1"/><rect x=".6" y="47.5" width="9" height="3.6" fill="#d9c9a4" stroke="#f5a623" stroke-width="1"/><rect x=".6" y="51.5" width="9" height="3.6" fill="#d9c9a4" stroke="#f5a623" stroke-width="1"/><rect x=".6" y="55.5" width="9" height="3.6" fill="#d9c9a4" stroke="#f5a623" stroke-width="1"/><rect x=".6" y="59.5" width="9" height="3.6" fill="#d9c9a4" stroke="#f5a623" stroke-width="1"/><rect x=".6" y="63.5" width="9" height="3.6" fill="#d9c9a4" stroke="#f5a623" stroke-width="1"/><rect x=".6" y="83.5" width="9" height="3.4" fill="#d9c9a4" stroke="#f5a623" stroke-width="1"/><rect x=".6" y="87.5" width="9" height="3.4" fill="#d9c9a4" stroke="#f5a623" stroke-width="1"/><rect x=".6" y="91.5" width="9" height="3.4" fill="#d9c9a4" stroke="#f5a623" stroke-width="1"/><rect x=".6" y="112" width="9" height="2.5" fill="#d9c9a4" stroke="#f5a623" stroke-width="1"/><rect x=".6" y="108.5" width="9" height="4.5" fill="#d9a0ac" stroke="#d0143c" stroke-width="1"/><rect x=".6" y="127" width="9" height="4" fill="#d9a0ac" stroke="#d0143c" stroke-width="1"/><rect x=".6" y="134" width="9" height="4" fill="#d9c9a4" stroke="#f5a623" stroke-width="1"/><rect x=".6" y="185.5" width="9" height="4" fill="#d9a0ac" stroke="#d0143c" stroke-width="1"/><rect x=".6" y="288" width="9" height="4" fill="#d9a0ac" stroke="#d0143c" stroke-width="1"/><rect x=".6" y="298" width="9" height="4" fill="#d9a0ac" stroke="#d0143c" stroke-width="1"/><rect x=".6" y="322" width="9" height="111" fill="#e8a0b0" stroke="#d0143c" stroke-width="1.100"/><rect x="1.6" y="324.5" width="7" height="1" fill="#d0143c"/><rect x="1.6" y="326.98" width="7" height="1" fill="#d0143c"/><rect x="1.6" y="329.46" width="7" height="1" fill="#d0143c"/><rect x="1.6" y="331.94" width="7" height="1" fill="#d0143c"/><rect x="1.6" y="334.42" width="7" height="1" fill="#d0143c"/><rect x="1.6" y="336.9" width="7" height="1" fill="#d0143c"/><rect x="1.6" y="339.38" width="7" height="1" fill="#d0143c"/><rect x="1.6" y="341.86" width="7" height="1" fill="#d0143c"/><rect x="1.6" y="344.34" width="7" height="1" fill="#d0143c"/><rect x="1.6" y="346.82" width="7" height="1" fill="#d0143c"/><rect x="1.6" y="349.3" width="7" height="1" fill="#d0143c"/><rect x="1.6" y="351.78" width="7" height="1" fill="#d0143c"/><rect x="1.6" y="354.26" width="7" height="1" fill="#d0143c"/><rect x="1.6" y="356.74" width="7" height="1" fill="#d0143c"/><rect x="1.6" y="359.22" width="7" height="1" fill="#d0143c"/><rect x="1.6" y="361.7" width="7" height="1" fill="#d0143c"/><rect x="1.6" y="364.18" width="7" height="1" fill="#d0143c"/><rect x="1.6" y="366.66" width="7" height="1" fill="#d0143c"/><rect x="1.6" y="369.14" width="7" height="1" fill="#d0143c"/><rect x="1.6" y="371.62" width="7" height="1" fill="#d0143c"/><rect x="1.6" y="374.1" width="7" height="1" fill="#d0143c"/><rect x="1.6" y="376.58" width="7" height="1" fill="#d0143c"/><rect x="1.6" y="379.06" width="7" height="1" fill="#d0143c"/><rect x="1.6" y="381.54" width="7" height="1" fill="#d0143c"/><rect x="1.6" y="384.02" width="7" height="1" fill="#d0143c"/><rect x="1.6" y="386.5" width="7" height="1" fill="#d0143c"/><rect x="1.6" y="388.98" width="7" height="1" fill="#d0143c"/><rect x="1.6" y="391.46" width="7" height="1" fill="#d0143c"/><rect x="1.6" y="393.94" width="7" height="1" fill="#d0143c"/><rect x="1.6" y="396.42" width="7" height="1" fill="#d0143c"/><rect x="1.6" y="398.9" width="7" height="1" fill="#d0143c"/><rect x="1.6" y="401.38" width="7" height="1" fill="#d0143c"/><rect x="1.6" y="403.86" width="7" height="1" fill="#d0143c"/><rect x="1.6" y="406.34" width="7" height="1" fill="#d0143c"/><rect x="1.6" y="408.82" width="7" height="1" fill="#d0143c"/><rect x="1.6" y="411.3" width="7" height="1" fill="#d0143c"/><rect x="1.6" y="413.78" width="7" height="1" fill="#d0143c"/><rect x="1.6" y="416.26" width="7" height="1" fill="#d0143c"/><rect x="1.6" y="418.74" width="7" height="1" fill="#d0143c"/><rect x="1.6" y="421.22" width="7" height="1" fill="#d0143c"/><rect x="1.6" y="423.7" width="7" height="1" fill="#d0143c"/><rect x="1.6" y="426.18" width="7" height="1" fill="#d0143c"/><rect x="1.6" y="428.66" width="7" height="1" fill="#d0143c"/><rect x="1.6" y="431.14" width="7" height="1" fill="#d0143c"/><rect x="0" y="433" width="10" height="1" fill="#f5a623"/><rect x="17" y="8" width="13" height="23" fill="#b4b4b4"/><rect x="17" y="8" width="13" height="1.3" fill="#148a14"/><rect x="17" y="13" width="13" height="1.3" fill="#148a14"/><rect x="17" y="17" width="13" height="1.3" fill="#148a14"/><rect x="17" y="22" width="13" height="1.3" fill="#148a14"/><rect x="17" y="24" width="13" height="1.3" fill="#148a14"/><rect x="17" y="28" width="13" height="1.3" fill="#148a14"/><rect x="17" y="10.5" width="13" height="1" fill="#d0d0d0"/><rect x="17" y="15" width="13" height="1" fill="#d0d0d0"/><rect x="17" y="20" width="13" height="1" fill="#d0d0d0"/><rect x="17" y="26" width="13" height="1" fill="#d0d0d0"/><rect x="17" y="31.5" width="13" height="1" fill="#e8e800"/><rect x="17" y="33" width="13" height="1.5" fill="#909090"/><rect x="17" y="34.5" width="13" height="1.3" fill="#1414ff"/><defs><linearGradient id="dk" x1="0" y1="0" x2="0" y2="1"><stop offset="0" stop-color="#8a8a8a"/><stop offset=".25" stop-color="#2e2e2e"/><stop offset=".5" stop-color="#4a4a4a"/><stop offset=".75" stop-color="#303030"/><stop offset="1" stop-color="#000"/></linearGradient></defs><rect x="17" y="36" width="13" height="15" fill="url(#dk)"/><rect x="17" y="51" width="13" height="2" fill="#9a9a9a"/><rect x="17" y="53.5" width="13" height="1.3" fill="#148a14"/><rect x="17" y="55" width="13" height="1.5" fill="#b0b0b0"/><rect x="17" y="56.5" width="13" height="1" fill="#6a6aff"/><rect x="17" y="58" width="13" height="3" fill="#ff4060"/><rect x="17" y="61.2" width="13" height="1.2" fill="#1414ff"/><rect x="17" y="62.5" width="13" height="2.5" fill="#a0a0a0"/><rect x="17" y="65" width="13" height="1.8" fill="#148a14"/><rect x="17" y="67" width="13" height="4" fill="#b0b0b0"/><rect x="17" y="71" width="13" height="14" fill="#000"/><rect x="17" y="85" width="13" height="1.5" fill="#7a7a7a"/><rect x="17" y="86.5" width="13" height="5.5" fill="#000"/><rect x="17" y="92" width="13" height="1" fill="#cfcfcf"/><rect x="17" y="93" width="13" height="16" fill="#000"/><rect x="17" y="109" width="13" height="321" fill="#d4d4d6"/><rect x="17" y="111" width="13" height="1" fill="#dededf"/><rect x="17" y="112.5" width="13" height="1" fill="#c4c4c6"/><rect x="17" y="114" width="13" height="1" fill="#c4c4c6"/><rect x="17" y="115.5" width="13" height="1" fill="#c4c4c6"/><rect x="17" y="118.5" width="13" height="1" fill="#c4c4c6"/><rect x="17" y="120" width="13" height="1" fill="#c4c4c6"/><rect x="17" y="121.5" width="13" height="1" fill="#e2e2e4"/><rect x="17" y="123" width="13" height="1" fill="#c4c4c6"/><rect x="17" y="129" width="13" height="1" fill="#e2e2e4"/><rect x="17" y="130.5" width="13" height="1" fill="#dededf"/><rect x="17" y="132" width="13" height="1" fill="#dededf"/><rect x="17" y="133.5" width="13" height="1" fill="#dededf"/><rect x="17" y="135" width="13" height="1" fill="#cacacc"/><rect x="17" y="139.5" width="13" height="1" fill="#dededf"/><rect x="17" y="141" width="13" height="1" fill="#c4c4c6"/><rect x="17" y="145.5" width="13" height="1" fill="#e2e2e4"/><rect x="17" y="148.5" width="13" height="1" fill="#e2e2e4"/><rect x="17" y="150" width="13" height="1" fill="#dededf"/><rect x="17" y="154.5" width="13" height="1" fill="#cacacc"/><rect x="17" y="156" width="13" height="1" fill="#cacacc"/><rect x="17" y="159" width="13" height="1" fill="#c4c4c6"/><rect x="17" y="160.5" width="13" height="1" fill="#e2e2e4"/><rect x="17" y="162" width="13" height="1" fill="#cacacc"/><rect x="17" y="163.5" width="13" height="1" fill="#e2e2e4"/><rect x="17" y="165" width="13" height="1" fill="#c4c4c6"/><rect x="17" y="171" width="13" height="1" fill="#cacacc"/><rect x="17" y="175.5" width="13" height="1" fill="#c4c4c6"/><rect x="17" y="178.5" width="13" height="1" fill="#c4c4c6"/><rect x="17" y="180" width="13" height="1" fill="#cacacc"/><rect x="17" y="186" width="13" height="1" fill="#e2e2e4"/><rect x="17" y="189" width="13" height="1" fill="#e2e2e4"/><rect x="17" y="190.5" width="13" height="1" fill="#c4c4c6"/><rect x="17" y="192" width="13" height="1" fill="#dededf"/><rect x="17" y="195" width="13" height="1" fill="#dededf"/><rect x="17" y="196.5" width="13" height="1" fill="#e2e2e4"/><rect x="17" y="198" width="13" height="1" fill="#e2e2e4"/><rect x="17" y="199.5" width="13" height="1" fill="#cacacc"/><rect x="17" y="205.5" width="13" height="1" fill="#e2e2e4"/><rect x="17" y="210" width="13" height="1" fill="#dededf"/><rect x="17" y="211.5" width="13" height="1" fill="#dededf"/><rect x="17" y="213" width="13" height="1" fill="#dededf"/><rect x="17" y="214.5" width="13" height="1" fill="#dededf"/><rect x="17" y="216" width="13" height="1" fill="#c4c4c6"/><rect x="17" y="217.5" width="13" height="1" fill="#cacacc"/><rect x="17" y="220.5" width="13" height="1" fill="#dededf"/><rect x="17" y="223.5" width="13" height="1" fill="#c4c4c6"/><rect x="17" y="225" width="13" height="1" fill="#e2e2e4"/><rect x="17" y="226.5" width="13" height="1" fill="#e2e2e4"/><rect x="17" y="228" width="13" height="1" fill="#e2e2e4"/><rect x="17" y="229.5" width="13" height="1" fill="#c4c4c6"/><rect x="17" y="232.5" width="13" height="1" fill="#c4c4c6"/><rect x="17" y="234" width="13" height="1" fill="#c4c4c6"/><rect x="17" y="235.5" width="13" height="1" fill="#dededf"/><rect x="17" y="237" width="13" height="1" fill="#cacacc"/><rect x="17" y="240" width="13" height="1" fill="#dededf"/><rect x="17" y="243" width="13" height="1" fill="#cacacc"/><rect x="17" y="247.5" width="13" height="1" fill="#c4c4c6"/><rect x="17" y="252" width="13" height="1" fill="#e2e2e4"/><rect x="17" y="253.5" width="13" height="1" fill="#dededf"/><rect x="17" y="255" width="13" height="1" fill="#cacacc"/><rect x="17" y="258" width="13" height="1" fill="#dededf"/><rect x="17" y="259.5" width="13" height="1" fill="#dededf"/><rect x="17" y="262.5" width="13" height="1" fill="#dededf"/><rect x="17" y="268.5" width="13" height="1" fill="#c4c4c6"/><rect x="17" y="271.5" width="13" height="1" fill="#cacacc"/><rect x="17" y="274.5" width="13" height="1" fill="#dededf"/><rect x="17" y="276" width="13" height="1" fill="#cacacc"/><rect x="17" y="283.5" width="13" height="1" fill="#dededf"/><rect x="17" y="288" width="13" height="1" fill="#e2e2e4"/><rect x="17" y="289.5" width="13" height="1" fill="#c4c4c6"/><rect x="17" y="294" width="13" height="1" fill="#dededf"/><rect x="17" y="298.5" width="13" height="1" fill="#cacacc"/><rect x="17" y="301.5" width="13" height="1" fill="#dededf"/><rect x="17" y="303" width="13" height="1" fill="#e2e2e4"/><rect x="17" y="304.5" width="13" height="1" fill="#dededf"/><rect x="17" y="306" width="13" height="1" fill="#c4c4c6"/><rect x="17" y="307.5" width="13" height="1" fill="#cacacc"/><rect x="17" y="310.5" width="13" height="1" fill="#c4c4c6"/><rect x="17" y="316.5" width="13" height="1" fill="#dededf"/><rect x="17" y="318" width="13" height="1" fill="#cacacc"/><rect x="17" y="319.5" width="13" height="1" fill="#e2e2e4"/><rect x="17" y="321" width="13" height="1" fill="#c4c4c6"/><rect x="17" y="324" width="13" height="1" fill="#dededf"/><rect x="17" y="325.5" width="13" height="1" fill="#e2e2e4"/><rect x="17" y="328.5" width="13" height="1" fill="#e2e2e4"/><rect x="17" y="331.5" width="13" height="1" fill="#dededf"/><rect x="17" y="333" width="13" height="1" fill="#c4c4c6"/><rect x="17" y="334.5" width="13" height="1" fill="#dededf"/><rect x="17" y="336" width="13" height="1" fill="#dededf"/><rect x="17" y="339" width="13" height="1" fill="#cacacc"/><rect x="17" y="340.5" width="13" height="1" fill="#dededf"/><rect x="17" y="343.5" width="13" height="1" fill="#e2e2e4"/><rect x="17" y="346.5" width="13" height="1" fill="#cacacc"/><rect x="17" y="352.5" width="13" height="1" fill="#dededf"/><rect x="17" y="354" width="13" height="1" fill="#c4c4c6"/><rect x="17" y="361.5" width="13" height="1" fill="#dededf"/><rect x="17" y="363" width="13" height="1" fill="#c4c4c6"/><rect x="17" y="366" width="13" height="1" fill="#e2e2e4"/><rect x="17" y="369" width="13" height="1" fill="#c4c4c6"/><rect x="17" y="370.5" width="13" height="1" fill="#cacacc"/><rect x="17" y="372" width="13" height="1" fill="#c4c4c6"/><rect x="17" y="373.5" width="13" height="1" fill="#c4c4c6"/><rect x="17" y="378" width="13" height="1" fill="#dededf"/><rect x="17" y="381" width="13" height="1" fill="#e2e2e4"/><rect x="17" y="382.5" width="13" height="1" fill="#dededf"/><rect x="17" y="388.5" width="13" height="1" fill="#dededf"/><rect x="17" y="391.5" width="13" height="1" fill="#c4c4c6"/><rect x="17" y="393" width="13" height="1" fill="#cacacc"/><rect x="17" y="394.5" width="13" height="1" fill="#dededf"/><rect x="17" y="396" width="13" height="1" fill="#dededf"/><rect x="17" y="402" width="13" height="1" fill="#cacacc"/><rect x="17" y="403.5" width="13" height="1" fill="#dededf"/><rect x="17" y="406.5" width="13" height="1" fill="#c4c4c6"/><rect x="17" y="408" width="13" height="1" fill="#e2e2e4"/><rect x="17" y="409.5" width="13" height="1" fill="#dededf"/><rect x="17" y="411" width="13" height="1" fill="#e2e2e4"/><rect x="17" y="414" width="13" height="1" fill="#e2e2e4"/><rect x="17" y="415.5" width="13" height="1" fill="#cacacc"/><rect x="17" y="417" width="13" height="1" fill="#cacacc"/><rect x="17" y="418.5" width="13" height="1" fill="#e2e2e4"/><rect x="17" y="420" width="13" height="1" fill="#c4c4c6"/><rect x="17" y="421.5" width="13" height="1" fill="#cacacc"/><rect x="17" y="423" width="13" height="1" fill="#c4c4c6"/><rect x="17" y="424.5" width="13" height="1" fill="#dededf"/><rect x="17" y="427.5" width="13" height="1" fill="#cacacc"/><rect x="17" y="110.5" width="13" height="1" fill="#2a2aff"/><rect x="17" y="116.5" width="13" height="1" fill="#2a2aff"/><rect x="17" y="118.5" width="13" height="1" fill="#2a2aff"/><rect x="17" y="126.5" width="13" height="1" fill="#2a2aff"/><rect x="17" y="130" width="13" height="1" fill="#2a2aff"/><rect x="17" y="134" width="13" height="1" fill="#2a2aff"/><rect x="17" y="137.5" width="13" height="1" fill="#2a2aff"/><rect x="17" y="148.5" width="13" height="1" fill="#2a2aff"/><rect x="17" y="234.5" width="13" height="1" fill="#2a2aff"/><rect x="17" y="242.5" width="13" height="1" fill="#2a2aff"/><rect x="17" y="270.5" width="13" height="1" fill="#2a2aff"/><rect x="17" y="283.5" width="13" height="1" fill="#2a2aff"/><rect x="17" y="290" width="13" height="1" fill="#2a2aff"/><rect x="17" y="306.5" width="13" height="1" fill="#2a2aff"/><rect x="17" y="318" width="13" height="1" fill="#2a2aff"/><rect x="17" y="325.5" width="13" height="1" fill="#2a2aff"/><rect x="17" y="331.5" width="13" height="1" fill="#2a2aff"/><rect x="17" y="359.5" width="13" height="1" fill="#2a2aff"/><rect x="17" y="427" width="13" height="1" fill="#2a2aff"/><rect x="17" y="428.5" width="13" height="1" fill="#2a2aff"/><rect x="17" y="122" width="13" height="1.2" fill="#9a9ae8"/><rect x="17" y="132" width="13" height="1.2" fill="#9a9ae8"/><rect x="17" y="139" width="13" height="1.2" fill="#9a9ae8"/><rect x="17" y="222" width="13" height="1.2" fill="#9a9ae8"/><rect x="17" y="226" width="13" height="1.2" fill="#9a9ae8"/><rect x="17" y="260" width="13" height="1.2" fill="#9a9ae8"/><rect x="17" y="296" width="13" height="1.2" fill="#9a9ae8"/><rect x="17" y="311" width="13" height="1.2" fill="#9a9ae8"/><rect x="17" y="328" width="13" height="1.2" fill="#9a9ae8"/><rect x="17" y="349" width="13" height="1.2" fill="#9a9ae8"/><rect x="17" y="323.5" width="13" height="1" fill="#148a14"/><rect x="17" y="343" width="13" height="3" fill="#1414ff"/><rect x="17" y="357" width="13" height="3" fill="#b0b0b0"/><rect x="17" y="430" width="13" height="42" fill="#5a6a5a"/><rect x="17" y="430" width="13" height="1.2" fill="#000"/><rect x="17" y="431.2" width="13" height="1.2" fill="#8a8a8a"/><rect x="17" y="432.4" width="13" height="1.2" fill="#8a8a8a"/><rect x="17" y="433.6" width="13" height="1.2" fill="#8a8a8a"/><rect x="17" y="434.8" width="13" height="1.2" fill="#0a5a0a"/><rect x="17" y="436" width="13" height="1.2" fill="#4a7a4a"/><rect x="17" y="437.2" width="13" height="1.2" fill="#2a6a2a"/><rect x="17" y="438.4" width="13" height="1.2" fill="#2e7a2e"/><rect x="17" y="439.6" width="13" height="1.2" fill="#5a5a5a"/><rect x="17" y="440.8" width="13" height="1.2" fill="#3a3a3a"/><rect x="17" y="442" width="13" height="1.2" fill="#6a6a6a"/><rect x="17" y="443.2" width="13" height="1.2" fill="#808080"/><rect x="17" y="444.4" width="13" height="1.2" fill="#2e7a2e"/><rect x="17" y="445.6" width="13" height="1.2" fill="#5a5a5a"/><rect x="17" y="446.8" width="13" height="1.2" fill="#3a3a3a"/><rect x="17" y="448" width="13" height="1.2" fill="#2e7a2e"/><rect x="17" y="449.2" width="13" height="1.2" fill="#5a5a5a"/><rect x="17" y="450.4" width="13" height="1.2" fill="#2e7a2e"/><rect x="17" y="451.6" width="13" height="1.2" fill="#3c8a3c"/><rect x="17" y="452.8" width="13" height="1.2" fill="#2e7a2e"/><rect x="17" y="454" width="13" height="1.2" fill="#5a5a5a"/><rect x="17" y="455.2" width="13" height="1.2" fill="#2e7a2e"/><rect x="17" y="456.4" width="13" height="1.2" fill="#4a7a4a"/><rect x="17" y="457.6" width="13" height="1.2" fill="#3a3a3a"/><rect x="17" y="458.8" width="13" height="1.2" fill="#2a6a2a"/><rect x="17" y="460" width="13" height="1.2" fill="#808080"/><rect x="17" y="461.2" width="13" height="1.2" fill="#5a5a5a"/><rect x="17" y="462.4" width="13" height="1.2" fill="#6a6a6a"/><rect x="17" y="463.6" width="13" height="1.2" fill="#3a3a3a"/><rect x="17" y="464.8" width="13" height="1.2" fill="#3c8a3c"/><rect x="17" y="466" width="13" height="1.2" fill="#2e7a2e"/><rect x="17" y="467.2" width="13" height="1.2" fill="#6a6a6a"/><rect x="17" y="468.4" width="13" height="1.2" fill="#5a5a5a"/><rect x="17" y="469.6" width="13" height="1.2" fill="#3a3a3a"/><rect x="17" y="470.8" width="13" height="1.2" fill="#6a6a6a"/><rect x="17" y="472" width="13" height="135" fill="#707070"/><rect x="17" y="472" width="13" height="1.2" fill="#ffff00"/><rect x="17" y="473.2" width="13" height="1.2" fill="#d8d800"/><rect x="17" y="474.4" width="13" height="1.2" fill="#646464"/><rect x="17" y="475.6" width="13" height="1.2" fill="#d8d800"/><rect x="17" y="476.8" width="13" height="1.2" fill="#ffff00"/><rect x="17" y="478" width="13" height="1.2" fill="#646464"/><rect x="17" y="479.2" width="13" height="1.2" fill="#f0f000"/><rect x="17" y="480.4" width="13" height="1.2" fill="#d8d800"/><rect x="17" y="481.6" width="13" height="1.2" fill="#828282"/><rect x="17" y="482.8" width="13" height="1.2" fill="#ffff00"/><rect x="17" y="484" width="13" height="1.2" fill="#d8d800"/><rect x="17" y="485.2" width="13" height="1.2" fill="#ffff00"/><rect x="17" y="486.4" width="13" height="1.2" fill="#ffff00"/><rect x="17" y="487.6" width="13" height="1.2" fill="#646464"/><rect x="17" y="488.8" width="13" height="1.2" fill="#767676"/><rect x="17" y="490" width="13" height="1.2" fill="#767676"/><rect x="17" y="491.2" width="13" height="1.2" fill="#646464"/><rect x="17" y="492.4" width="13" height="1.2" fill="#767676"/><rect x="17" y="493.6" width="13" height="1.2" fill="#d8d800"/><rect x="17" y="494.8" width="13" height="1.2" fill="#646464"/><rect x="17" y="496" width="13" height="1.2" fill="#6c6c6c"/><rect x="17" y="497.2" width="13" height="1.2" fill="#ffff00"/><rect x="17" y="498.4" width="13" height="1.2" fill="#646464"/><rect x="17" y="499.6" width="13" height="1.2" fill="#646464"/><rect x="17" y="500.8" width="13" height="1.2" fill="#f0f000"/><rect x="17" y="502" width="13" height="1.2" fill="#ffff00"/><rect x="17" y="503.2" width="13" height="1.2" fill="#ffff00"/><rect x="17" y="504.4" width="13" height="1.2" fill="#646464"/><rect x="17" y="505.6" width="13" height="1.2" fill="#ffff00"/><rect x="17" y="506.8" width="13" height="1.2" fill="#f0f000"/><rect x="17" y="508" width="13" height="1.2" fill="#ffff00"/><rect x="17" y="509.2" width="13" height="1.2" fill="#ffff00"/><rect x="17" y="510.4" width="13" height="1.2" fill="#f0f000"/><rect x="17" y="511.6" width="13" height="1.2" fill="#f0f000"/><rect x="17" y="512.8" width="13" height="1.2" fill="#f0f000"/><rect x="17" y="514" width="13" height="1.2" fill="#d8d800"/><rect x="17" y="515.2" width="13" height="1.2" fill="#f0f000"/><rect x="17" y="516.4" width="13" height="1.2" fill="#d8d800"/><rect x="17" y="517.6" width="13" height="1.2" fill="#d8d800"/><rect x="17" y="518.8" width="13" height="1.2" fill="#767676"/><rect x="17" y="520" width="13" height="1.2" fill="#d8d800"/><rect x="17" y="521.2" width="13" height="1.2" fill="#828282"/><rect x="17" y="522.4" width="13" height="1.2" fill="#828282"/><rect x="17" y="523.6" width="13" height="1.2" fill="#d8d800"/><rect x="17" y="524.8" width="13" height="1.2" fill="#f0f000"/><rect x="17" y="526" width="13" height="1.2" fill="#d8d800"/><rect x="17" y="527.2" width="13" height="1.2" fill="#828282"/><rect x="17" y="528.4" width="13" height="1.2" fill="#d8d800"/><rect x="17" y="529.6" width="13" height="1.2" fill="#d8d800"/><rect x="17" y="530.8" width="13" height="1.2" fill="#6c6c6c"/><rect x="17" y="532" width="13" height="1.2" fill="#767676"/><rect x="17" y="533.2" width="13" height="1.2" fill="#f0f000"/><rect x="17" y="534.4" width="13" height="1.2" fill="#ffff00"/><rect x="17" y="535.6" width="13" height="1.2" fill="#828282"/><rect x="17" y="536.8" width="13" height="1.2" fill="#6c6c6c"/><rect x="17" y="538" width="13" height="1.2" fill="#d8d800"/><rect x="17" y="539.2" width="13" height="1.2" fill="#f0f000"/><rect x="17" y="540.4" width="13" height="1.2" fill="#f0f000"/><rect x="17" y="541.6" width="13" height="1.2" fill="#f0f000"/><rect x="17" y="542.8" width="13" height="1.2" fill="#d8d800"/><rect x="17" y="544" width="13" height="1.2" fill="#6c6c6c"/><rect x="17" y="545.2" width="13" height="1.2" fill="#f0f000"/><rect x="17" y="546.4" width="13" height="1.2" fill="#ffff00"/><rect x="17" y="547.6" width="13" height="1.2" fill="#f0f000"/><rect x="17" y="548.8" width="13" height="1.2" fill="#767676"/><rect x="17" y="550" width="13" height="1.2" fill="#f0f000"/><rect x="17" y="551.2" width="13" height="1.2" fill="#d8d800"/><rect x="17" y="552.4" width="13" height="1.2" fill="#828282"/><rect x="17" y="553.6" width="13" height="1.2" fill="#6c6c6c"/><rect x="17" y="554.8" width="13" height="1.2" fill="#d8d800"/><rect x="17" y="556" width="13" height="1.2" fill="#f0f000"/><rect x="17" y="557.2" width="13" height="1.2" fill="#d8d800"/><rect x="17" y="558.4" width="13" height="1.2" fill="#d8d800"/><rect x="17" y="559.6" width="13" height="1.2" fill="#ffff00"/><rect x="17" y="560.8" width="13" height="1.2" fill="#d8d800"/><rect x="17" y="562" width="13" height="1.2" fill="#d8d800"/><rect x="17" y="563.2" width="13" height="1.2" fill="#ffff00"/><rect x="17" y="564.4" width="13" height="1.2" fill="#ffff00"/><rect x="17" y="565.6" width="13" height="1.2" fill="#6c6c6c"/><rect x="17" y="566.8" width="13" height="1.2" fill="#828282"/><rect x="17" y="568" width="13" height="1.2" fill="#646464"/><rect x="17" y="569.2" width="13" height="1.2" fill="#828282"/><rect x="17" y="570.4" width="13" height="1.2" fill="#767676"/><rect x="17" y="571.6" width="13" height="1.2" fill="#6c6c6c"/><rect x="17" y="572.8" width="13" height="1.2" fill="#6c6c6c"/><rect x="17" y="574" width="13" height="1.2" fill="#6c6c6c"/><rect x="17" y="575.2" width="13" height="1.2" fill="#828282"/><rect x="17" y="576.4" width="13" height="1.2" fill="#828282"/><rect x="17" y="577.6" width="13" height="1.2" fill="#f0f000"/><rect x="17" y="578.8" width="13" height="1.2" fill="#f0f000"/><rect x="17" y="580" width="13" height="1.2" fill="#d8d800"/><rect x="17" y="581.2" width="13" height="1.2" fill="#ffff00"/><rect x="17" y="582.4" width="13" height="1.2" fill="#d8d800"/><rect x="17" y="583.6" width="13" height="1.2" fill="#f0f000"/><rect x="17" y="584.8" width="13" height="1.2" fill="#f0f000"/><rect x="17" y="586" width="13" height="1.2" fill="#ffff00"/><rect x="17" y="587.2" width="13" height="1.2" fill="#767676"/><rect x="17" y="588.4" width="13" height="1.2" fill="#ffff00"/><rect x="17" y="589.6" width="13" height="1.2" fill="#828282"/><rect x="17" y="590.8" width="13" height="1.2" fill="#767676"/><rect x="17" y="592" width="13" height="1.2" fill="#ffff00"/><rect x="17" y="593.2" width="13" height="1.2" fill="#ffff00"/><rect x="17" y="594.4" width="13" height="1.2" fill="#ffff00"/><rect x="17" y="595.6" width="13" height="1.2" fill="#6c6c6c"/><rect x="17" y="596.8" width="13" height="1.2" fill="#767676"/><rect x="17" y="598" width="13" height="1.2" fill="#d8d800"/><rect x="17" y="599.2" width="13" height="1.2" fill="#646464"/><rect x="17" y="600.4" width="13" height="1.2" fill="#ffff00"/><rect x="17" y="601.6" width="13" height="1.2" fill="#6c6c6c"/><rect x="17" y="602.8" width="13" height="1.2" fill="#828282"/><rect x="17" y="604" width="13" height="1.2" fill="#6c6c6c"/><rect x="17" y="605.2" width="13" height="1.2" fill="#6c6c6c"/><rect x="17" y="606.4" width="13" height="1.2" fill="#646464"/><rect x="33" y="8" width="13" height="101" fill="#98fb98"/><rect x="33" y="8" width="13" height="2" fill="#ff0000"/><rect x="33" y="28" width="13" height="1.2" fill="#ff0000"/><rect x="33" y="30" width="13" height="3" fill="#ff0000"/><rect x="33" y="36" width="13" height="13" fill="#ff0000"/><rect x="33" y="52" width="13" height="1.8" fill="#ff0000"/><rect x="33" y="55" width="13" height="2" fill="#ff0000"/><rect x="33" y="65.3" width="13" height="1" fill="#ff0000"/><rect x="33" y="85" width="13" height="6" fill="#ff0000"/><rect x="33" y="72" width="13" height="1.8" fill="#000"/><rect x="33" y="75" width="13" height="1" fill="#000"/><rect x="33" y="93" width="13" height="16" fill="#000"/><rect x="33" y="109" width="13" height="324" fill="#a0a0ff"/><rect x="33" y="115.5" width="13" height="1.2" fill="#98fb98"/><rect x="33" y="138.5" width="13" height="1.2" fill="#98fb98"/><rect x="33" y="147" width="13" height="1.2" fill="#98fb98"/><rect x="33" y="149" width="13" height="1.2" fill="#98fb98"/><rect x="33" y="156.5" width="13" height="1.2" fill="#98fb98"/><rect x="33" y="247.5" width="13" height="1.2" fill="#98fb98"/><rect x="33" y="307.5" width="13" height="1.2" fill="#98fb98"/><rect x="33" y="313.5" width="13" height="1.2" fill="#98fb98"/><rect x="33" y="146.5" width="13" height="3" fill="#98fb98"/><rect x="33" y="195" width="13" height="1.2" fill="#ff0000"/><rect x="33" y="324.5" width="13" height="1.2" fill="#ff0000"/><rect x="33" y="338.5" width="13" height="1.2" fill="#ff0000"/><rect x="33" y="346" width="13" height="1.2" fill="#ff0000"/><rect x="33" y="359.5" width="13" height="1.2" fill="#ff0000"/><rect x="33" y="363.5" width="13" height="1.2" fill="#ff0000"/><rect x="33" y="414.5" width="13" height="1.2" fill="#ff0000"/><rect x="33" y="303" width="13" height="3" fill="#ff0000"/><rect x="33" y="328.6" width="13" height="1.2" fill="#b8b8ff"/><rect x="33" y="330.2" width="13" height="1.2" fill="#b8b8ff"/><rect x="33" y="331.8" width="13" height="1.2" fill="#b8b8ff"/><rect x="33" y="335" width="13" height="1.2" fill="#b4c4ff"/><rect x="33" y="346.2" width="13" height="1.2" fill="#a8c0ff"/><rect x="33" y="347.8" width="13" height="1.2" fill="#aab8ff"/><rect x="33" y="351" width="13" height="1.2" fill="#b4c4ff"/><rect x="33" y="355.8" width="13" height="1.2" fill="#a8c0ff"/><rect x="33" y="357.4" width="13" height="1.2" fill="#b8b8ff"/><rect x="33" y="359" width="13" height="1.2" fill="#b8b8ff"/><rect x="33" y="360.6" width="13" height="1.2" fill="#aab8ff"/><rect x="33" y="362.2" width="13" height="1.2" fill="#a8c0ff"/><rect x="33" y="363.8" width="13" height="1.2" fill="#aab8ff"/><rect x="33" y="365.4" width="13" height="1.2" fill="#a8c0ff"/><rect x="33" y="368.6" width="13" height="1.2" fill="#b8b8ff"/><rect x="33" y="371.8" width="13" height="1.2" fill="#aab8ff"/><rect x="33" y="375" width="13" height="1.2" fill="#aab8ff"/><rect x="33" y="376.6" width="13" height="1.2" fill="#b4c4ff"/><rect x="33" y="378.2" width="13" height="1.2" fill="#b8b8ff"/><rect x="33" y="379.8" width="13" height="1.2" fill="#aab8ff"/><rect x="33" y="384.6" width="13" height="1.2" fill="#a8c0ff"/><rect x="33" y="387.8" width="13" height="1.2" fill="#b8b8ff"/><rect x="33" y="389.4" width="13" height="1.2" fill="#b4c4ff"/><rect x="33" y="391" width="13" height="1.2" fill="#b8b8ff"/><rect x="33" y="392.6" width="13" height="1.2" fill="#aab8ff"/><rect x="33" y="394.2" width="13" height="1.2" fill="#aab8ff"/><rect x="33" y="395.8" width="13" height="1.2" fill="#a8c0ff"/><rect x="33" y="397.4" width="13" height="1.2" fill="#b8b8ff"/><rect x="33" y="402.2" width="13" height="1.2" fill="#b4c4ff"/><rect x="33" y="403.8" width="13" height="1.2" fill="#a8c0ff"/><rect x="33" y="407" width="13" height="1.2" fill="#b4c4ff"/><rect x="33" y="408.6" width="13" height="1.2" fill="#a8c0ff"/><rect x="33" y="411.8" width="13" height="1.2" fill="#b4c4ff"/><rect x="33" y="413.4" width="13" height="1.2" fill="#aab8ff"/><rect x="33" y="424.6" width="13" height="1.2" fill="#b4c4ff"/><rect x="33" y="426.2" width="13" height="1.2" fill="#aab8ff"/><rect x="33" y="427.8" width="13" height="1.2" fill="#b4c4ff"/><rect x="33" y="431" width="13" height="1.2" fill="#aab8ff"/><rect x="33" y="338.5" width="13" height="1.2" fill="#ff0000"/><rect x="33" y="346" width="13" height="1.2" fill="#ff0000"/><rect x="33" y="359.5" width="13" height="1.2" fill="#ff0000"/><rect x="33" y="363.5" width="13" height="1.2" fill="#ff0000"/><rect x="33" y="414.5" width="13" height="1.2" fill="#ff0000"/><rect x="33" y="415" width="13" height="6" fill="#a8c4ff"/><rect x="33" y="433" width="13" height="36" fill="#98fb98"/><rect x="33" y="436" width="13" height="1" fill="#ff0000"/><rect x="33" y="469" width="13" height="138" fill="#ff0000"/><rect x="33" y="606" width="13" height="1" fill="#98fb98"/></svg><div style="left:1454px;top:79px;width:629px;height:24px;background:linear-gradient(to right,#b5b5b5 0px,#b6b6b7 45%,#bfc0c3 75%,#c9cbd0 100%);border:1px solid #85888f;border-top-color:#7f8187;border-left-color:#8f9299"></div><svg style="left:1458px;top:83px" width="16" height="16" viewBox="0 0 16 16"><text x="5.800" y="12" text-anchor="middle" font-family="Liberation Sans" font-weight="bold" font-size="15.500" fill="#2f7df0" stroke="#2f7df0" stroke-width=".7">C</text><text x="12.600" y="15.400" text-anchor="middle" font-family="Liberation Serif" font-style="italic" font-weight="bold" font-size="12.500" fill="#e414c8" stroke="#e414c8" stroke-width=".5">f</text></svg><div class="t" style="left:1477px;top:82.5px;font-size:12.4px;letter-spacing:0.023px;">Decompile: UndefinedFunction_400d4f5f -  (project.ino.bin)</div><svg style="left:1873px;top:83px" width="16" height="16" viewBox="0 0 16 16"><path d="M2.200 7.400A5.900 5.900 0 0 1 12.600 3.800L14.400 2v5.400H9l2-2A3.500 3.500 0 0 0 5 7.400z" fill="#3cc43c" stroke="#0d6e0d" stroke-width=".8" stroke-linejoin="round"/><path d="M13.800 8.600A5.900 5.900 0 0 1 3.400 12.200L1.600 14V8.600H7l-2 2a3.500 3.500 0 0 0 6-2z" fill="#3cc43c" stroke="#0d6e0d" stroke-width=".8" stroke-linejoin="round"/></svg><svg style="left:1895px;top:83px" width="16" height="16" viewBox="0 0 16 16"><rect x="6.2" y="1" width="3.6" height="3.6" fill="#8fb7ee" stroke="#4a86d8" stroke-width=".8"/><path d="M8 4.8v2.6M2.6 10V7.4h10.8V10M8 7.4V10" stroke="#8a8a8a" stroke-width="1" fill="none"/><g stroke-width=".8"><rect x="1" y="10.4" width="3.4" height="3.4" fill="#7cc47c" stroke="#3f9a3f"/><rect x="6.3" y="10.4" width="3.4" height="3.4" fill="#7cc47c" stroke="#3f9a3f"/><rect x="11.6" y="10.4" width="3.4" height="3.4" fill="#e84040" stroke="#b01a1a"/></g></svg><svg style="left:1917px;top:83px" width="16" height="16" viewBox="0 0 16 16"><text x="8" y="13.200" text-anchor="middle" font-family="Liberation Sans" font-weight="bold" font-size="13" fill="#2f7df0" letter-spacing="-.6">Ro</text></svg><div style="left:1942px;top:82px;width:1px;height:18px;background:#a0a3ab"></div><svg style="left:1951px;top:83px" width="16" height="16" viewBox="0 0 16 16"><path d="M1 1h6.400l2.400 2.400V10.400H1z" fill="#f4f4f4" stroke="#b0b0b0" stroke-width=".9"/><path d="M6.200 5h6.200l2.600 2.600V15H6.200z" fill="#fcfcfc" stroke="#b0b0b0" stroke-width=".9"/><path d="M12.400 5v2.600H15" fill="none" stroke="#b0b0b0" stroke-width=".7"/></svg><div style="left:1976px;top:82px;width:1px;height:18px;background:#a0a3ab"></div><svg style="left:1985px;top:83px" width="16" height="16" viewBox="0 0 16 16"><rect x="1" y="1.4" width="12.6" height="13.6" fill="#f4f8ff" stroke="#4a86d8" stroke-width="1.1"/><path d="M3 5h7M3 7.6h6M3 10.2h4" stroke="#c6d6ee" stroke-width=".9"/><path d="M13.4 1.2l2 2L8 11.4l-3 1.2 1-3.2z" fill="#f0a030" stroke="#b8700a" stroke-width=".7"/><path d="M5 12.6l1-3.2 2 2z" fill="#f6dcae"/></svg><div style="left:2010px;top:82px;width:1px;height:18px;background:#a0a3ab"></div><svg style="left:2018px;top:82.5px" width="17" height="17" viewBox="0 0 16 16"><rect x=".8" y="4" width="14.4" height="10.6" rx="1.4" fill="#2a2a2a" stroke="#000" stroke-width=".6"/><rect x="4.6" y="1.2" width="6.8" height="3.6" rx=".8" fill="#3a3a3a" stroke="#000" stroke-width=".6"/><rect x="5.8" y="2" width="4.4" height="1.6" fill="#ddd"/><rect x="1.6" y="5.2" width="12.8" height="1.6" fill="#8a8a8a"/><circle cx="8" cy="10" r="3.6" fill="#555" stroke="#bbb" stroke-width=".9"/><circle cx="8" cy="10" r="1.9" fill="#111"/><circle cx="7.2" cy="9.2" r=".7" fill="#ccc"/></svg><svg style="left:2043.5px;top:84px" width="15" height="15" viewBox="0 0 16 16"><path d="M3.6 6h8.8L8 10.6z" fill="#000"/></svg><svg style="left:2064px;top:83.5px" width="15" height="15" viewBox="0 0 16 16"><path d="M3.2 3.2L12.8 12.8M12.8 3.2L3.2 12.8" stroke="#000" stroke-width="2.3" fill="none"/></svg><div style="left:1454px;top:103px;width:629px;height:644px;background:#d6d9e0;border-left:1px solid #c0c3ca"></div><div style="left:1472px;top:105px;width:610px;height:624px;background:#c0c0c0;border-left:2px solid #a9acb3;border-top:2px solid #a9acb3"></div><div class="t" style="left:1461.3px;top:106.00px;font-size:12.600px;color:#000">1</div><div class="t" style="left:1461.3px;top:123.95px;font-size:12.600px;color:#000">2</div><div class="t" style="left:1461.3px;top:141.90px;font-size:12.600px;color:#000">3</div><div class="t" style="left:1461.3px;top:159.85px;font-size:12.600px;color:#000">4</div><div class="t" style="left:1461.3px;top:177.80px;font-size:12.600px;color:#000">5</div><div class="t" style="left:1461.3px;top:195.75px;font-size:12.600px;color:#000">6</div><div class="t" style="left:1461.3px;top:213.70px;font-size:12.600px;color:#000">7</div><div class="t" style="left:1461.3px;top:231.65px;font-size:12.600px;color:#000">8</div><div class="t" style="left:1461.3px;top:249.60px;font-size:12.600px;color:#000">9</div><div class="t" style="left:1454.1px;top:267.55px;font-size:12.600px;color:#000">10</div><div class="m" style="left:1473px;top:124.95px;color:#9433d6;">/* WARNING: Control flow encountered bad instruction data */</div><div class="m" style="left:1473px;top:160.85px;color:#000;"><span style="color:#0000e6">void</span> <span style="color:#dc143c">UndefinedFunction_400d4f5f</span>(<span style="color:#0000e6">void</span>)</div><div style="left:1473px;top:160px;width:28px;height:18px;background:#e6e64c"></div><div style="left:1473px;top:160px;width:2px;height:18px;background:#f6aebe"></div><div class="m" style="left:1473px;top:160.85px;color:#000;"><span style="color:#0000e6">void</span></div><div class="m" style="left:1473px;top:196.75px;color:#000;">{</div><div class="m" style="left:1613px;top:214.70px;color:#9433d6;">/* WARNING: Bad instruction - Truncating control flow here */</div><div class="m" style="left:1487px;top:232.65px;color:#000;"><span style="color:#dc143c">halt_baddata</span>();</div><div class="m" style="left:1473px;top:250.60px;color:#000;">}</div><div style="left:1474px;top:729px;width:607px;height:15px;background:linear-gradient(135deg,#fafbfc,#e3e5ea)"></div><div style="left:1490px;top:729px;width:575px;height:15px;background:linear-gradient(to bottom,#86878c 0%,#aeafb4 30%,#cdcfd5 60%,#d9dce3 88%);border-radius:0 0 11px 11px"></div><div style="left:1490px;top:729px;width:12px;height:15px;background:linear-gradient(to left,rgba(70,72,80,0),rgba(70,72,80,.55));border-radius:0 0 0 11px"></div><div style="left:2053px;top:729px;width:12px;height:15px;background:linear-gradient(to right,rgba(70,72,80,0),rgba(70,72,80,.55));border-radius:0 0 11px 0"></div><svg style="left:1477.5px;top:732px" width="9" height="9" viewBox="0 0 9 9"><path d="M1 4.500L8 .5v8z" fill="#3c3c3c"/></svg><svg style="left:2068.5px;top:732px" width="9" height="9" viewBox="0 0 9 9"><path d="M1 .5l7 4-7 4z" fill="#3c3c3c"/></svg><div style="left:1490px;top:729px;width:199px;height:14px;border:1px solid #17365c;border-top:none;border-radius:0 0 13px 13px/0 0 11px 11px;background:linear-gradient(to bottom,#dbe6f1 0%,#a9c1dc 25%,#c3d7ea 60%,#e8f4fb 100%)"></div><div style="left:2081px;top:105px;width:2px;height:642px;background:#c8cbd2"></div><div style="left:1454px;top:747px;width:629px;height:2px;background:#1d2f4c"></div><div style="left:1454px;top:748.5px;width:629px;height:2.5px;background:#bdd5ec"></div><div style="left:1454px;top:751px;width:629px;height:1px;background:#a0b0c4"></div><div style="left:1464px;top:751px;width:201px;height:24px;border:1px solid #2b4a6e;border-top:none;border-radius:0 0 7px 7px;background:linear-gradient(#e8eff7,#c5d6e8 60%,#b6cbe2)"></div><svg style="left:1472.5px;top:754.5px" width="15" height="15" viewBox="0 0 16 16"><text x="5.800" y="12" text-anchor="middle" font-family="Liberation Sans" font-weight="bold" font-size="15.500" fill="#2f7df0" stroke="#2f7df0" stroke-width=".7">C</text><text x="12.600" y="15.400" text-anchor="middle" font-family="Liberation Serif" font-style="italic" font-weight="bold" font-size="12.500" fill="#e414c8" stroke="#e414c8" stroke-width=".5">f</text></svg><div class="t" style="left:1493px;top:753.5px;font-size:12.6px;letter-spacing:-0.167px;">Decompile: UndefinedFu...</div><svg style="left:1646px;top:757px" width="9" height="9" viewBox="0 0 9 9"><path d="M1.500 1.500l6 6M7.500 1.500l-6 6" stroke="#111" stroke-width="1.500"/></svg><div style="left:1666px;top:751px;width:172px;height:24px;border:1px solid #4a4d55;border-radius:0 0 6px 6px;border-top-color:#6a6d75;background:linear-gradient(#f2f3f6,#dcdfe6)"></div><svg style="left:1674px;top:755px" width="14" height="14" viewBox="0 0 16 16"><path d="M1 .8h10.6L15 4.2V15.2H1z" fill="#fff" stroke="#000" stroke-width="1.3"/><path d="M11.4 .8v3.6H15" fill="none" stroke="#000" stroke-width="1"/><g fill="none" stroke="#000" stroke-width="1.700"><path d="M4.200 2.400v4.800"/><rect x="6.800" y="3.200" width="2.400" height="3.200"/><rect x="3.400" y="9.400" width="2.400" height="3.400"/><path d="M9.200 8.600v5"/></g></svg><div class="t" style="left:1695px;top:753.5px;font-size:12.6px;letter-spacing:-0.044px;">Bytes: project.ino.bin</div><svg style="left:1818px;top:757px" width="9" height="9" viewBox="0 0 9 9"><path d="M1.500 1.500l6 6M7.500 1.500l-6 6" stroke="#111" stroke-width="1.500"/></svg><div style="left:323px;top:782px;width:1760px;height:2.5px;background:#fbfbfc"></div><div style="left:323px;top:784px;width:2px;height:278px;background:#fbfbfc"></div><div style="left:325px;top:785px;width:1758px;height:23px;background:linear-gradient(to right,#adadad 0px,#aaaaab 19%,#b6b6b8 42%,#c7c8cb 61%,#d0d2d6 77%,#d8dbe2 100%);border:1px solid #85888f;border-top-color:#7f8187;border-left-color:#8f9299"></div><svg style="left:329px;top:789px" width="14" height="14" viewBox="0 0 16 16"><rect x="1" y="1.4" width="14" height="10" rx=".8" fill="#e8e8e8" stroke="#8a8a8a" stroke-width=".9"/><rect x="2.4" y="2.8" width="11.2" height="7.2" fill="#3f7fe0"/><rect x="2.4" y="2.8" width="11.2" height="3" fill="#7fb0f2"/><path d="M6.6 11.6h2.8v1.8h2v1.4H4.6v-1.4h2z" fill="#c8c8c8" stroke="#8a8a8a" stroke-width=".5"/></svg><div class="t" style="left:348px;top:788px;font-size:12.4px;letter-spacing:-0.040px;">Console - Scripting</div><svg style="left:2017px;top:788px" width="16" height="16" viewBox="0 0 16 16"><path d="M4 8V5.200a4 4 0 0 1 8 0V8" stroke="#b4b4b4" stroke-width="2" fill="none"/><path d="M4 8V5.200a4 4 0 0 1 8 0V8" stroke="#e2e2e2" stroke-width=".7" fill="none"/><rect x="1.400" y="7.400" width="13.200" height="8" fill="#f9d470" stroke="#e8971a" stroke-width="1"/><path d="M3.200 10h3.600M9.200 10h3.600M3.200 12.400h3.600M9.200 12.400h3.600" stroke="#fff3c4" stroke-width="1.200"/><rect x="7.200" y="9.200" width="1.600" height="3.200" fill="#5a4a2a"/></svg><svg style="left:2038.75px;top:787.75px" width="16.5" height="16.5" viewBox="0 0 16 16"><path d="M8.600 .6l5.600 1.400-4 10.400-5.200-1.800z" fill="#f4d020" stroke="#1a1a1a" stroke-width="1"/><path d="M7 5.200l5.400 1.700M6.200 7.300l5.400 1.700" stroke="#fff6b0" stroke-width="1"/><path d="M5 10.600l5.200 1.800c-.6 2.200-2.200 3.200-3.800 2.600s-2.200-2.200-1.400-4.400z" fill="#f4b4bc" stroke="#c87a86" stroke-width=".7"/><path d="M9.800 15.200h5" stroke="#e8a0a8" stroke-width="1" stroke-dasharray="1.500 1"/></svg><div style="left:2059px;top:788px;width:1px;height:17px;background:#a0a3ab"></div><svg style="left:2063px;top:789px" width="15" height="15" viewBox="0 0 16 16"><path d="M3.2 3.2L12.8 12.8M12.8 3.2L3.2 12.8" stroke="#000" stroke-width="2.3" fill="none"/></svg><div style="left:325px;top:808px;width:1758px;height:252px;background:#d6d9e0"></div><div style="left:327px;top:810px;width:1754px;height:248px;background:#fff;border:1px solid #9a9da5"></div><div style="left:323px;top:1060.5px;width:1760px;height:1.5px;background:#74777f"></div><div style="left:0px;top:1066px;width:2083px;height:2px;background:#fbfbfc"></div><div style="left:2px;top:1069px;width:2081px;height:23px;background:linear-gradient(to right,#adadad 0px,#aaaaab 19%,#b6b6b8 42%,#c7c8cb 61%,#d0d2d6 77%,#d8dbe2 100%);border:1px solid #85888f;border-top-color:#7f8187;border-left-color:#8f9299"></div><svg style="left:4.5px;top:1073px" width="15" height="15" viewBox="0 0 16 16"><path d="M4.500 14.800h10.300V4.500l-3 3L5.200 1 1 5.200l6.600 6.600z" fill="#2fb52f" stroke="#0d5e0d" stroke-width="1.100" stroke-linejoin="round"/><path d="M3 5.200l2.200-2.200 6.600 6.600" stroke="#8fe08f" stroke-width="1" fill="none"/></svg><div class="t" style="left:25px;top:1072px;font-size:12.4px;letter-spacing:-0.042px;">Function Call Trees: app_main -  (project.ino.bin)</div><svg style="left:1860px;top:1071.8px" width="16" height="16" viewBox="0 0 16 16"><path d="M.8 8.2L8 1.4l7.2 6.8" stroke="#e01818" stroke-width="1.6" fill="none"/><path d="M2.8 8v6.8h10.4V8L8 3.2z" fill="#f2f2f2" stroke="#777" stroke-width=".8"/><rect x="8.6" y="9.4" width="3.2" height="3" fill="#4a7bd0"/><rect x="4.4" y="9.8" width="2.6" height="5" fill="#8a8a8a"/></svg><svg style="left:1882px;top:1071.8px" width="16" height="16" viewBox="0 0 16 16"><path d="M2.200 7.400A5.900 5.900 0 0 1 12.600 3.800L14.400 2v5.400H9l2-2A3.500 3.500 0 0 0 5 7.400z" fill="#ababab" stroke="#9c9c9c" stroke-width=".8" stroke-linejoin="round"/><path d="M13.800 8.600A5.900 5.900 0 0 1 3.400 12.200L1.600 14V8.600H7l-2 2a3.500 3.500 0 0 0 6-2z" fill="#ababab" stroke="#9c9c9c" stroke-width=".8" stroke-linejoin="round"/></svg><div style="left:1908px;top:1072px;width:1px;height:17px;background:#a0a3ab"></div><div style="left:1914px;top:1070px;width:21px;height:21px;background:linear-gradient(#f4f5f8,#e2e4ea);border:1px solid #8d9097;border-right-color:#c9ccd2;border-bottom-color:#c9ccd2"></div><svg style="left:1917px;top:1072.8px" width="15" height="15" viewBox="0 0 16 16"><rect x="1" y="1" width="10.6" height="8.6" fill="#cfe0f8" stroke="#5a86cc" stroke-width="1"/><rect x="1" y="1" width="10.6" height="2.2" fill="#5a86cc"/><rect x="4.4" y="6" width="10.6" height="8.8" fill="#f2f7ff" stroke="#5a86cc" stroke-width="1"/><rect x="4.4" y="6" width="10.6" height="2.2" fill="#5a86cc"/></svg><svg style="left:1939.5px;top:1072.3px" width="15" height="15" viewBox="0 0 16 16"><rect x="1" y="5.6" width="6.6" height="4.8" rx="2.2" fill="none" stroke="#a0a0a0" stroke-width="1.4"/><rect x="8.4" y="5.6" width="6.6" height="4.8" rx="2.2" fill="none" stroke="#a0a0a0" stroke-width="1.4"/><path d="M5 8h6" stroke="#8e8e8e" stroke-width="1.6"/></svg><div style="left:1960px;top:1072px;width:18px;height:17px;background:#fff;border:1px solid #8fb6e8"></div><div class="t" style="left:1965px;top:1072.5px;font-size:12px;font-weight:bold;">5</div><div style="left:1986px;top:1072px;width:1px;height:17px;background:#a0a3ab"></div><div style="left:1992px;top:1070px;width:22px;height:21px;background:linear-gradient(#f4f5f8,#e2e4ea);border:1px solid #8d9097;border-right-color:#c9ccd2;border-bottom-color:#c9ccd2"></div><div style="left:2014px;top:1070px;width:22px;height:21px;background:linear-gradient(#f4f5f8,#e2e4ea);border:1px solid #8d9097;border-right-color:#c9ccd2;border-bottom-color:#c9ccd2"></div><svg style="left:1995.5px;top:1072.3px" width="15" height="15" viewBox="0 0 16 16"><rect x="1.6" y="6.4" width="8.8" height="8.8" fill="#e6f0fc" stroke="#333" stroke-width=".9"/><path d="M3.4 9h5M3.4 11h5M3.4 13h3" stroke="#9ab" stroke-width=".8"/><path d="M5.6 10V5.6c0-1.6 1-2.4 3-2.4h1.8" stroke="#1fa01f" stroke-width="2" fill="none"/><path d="M10 .4l4.6 3-4.6 3z" fill="#1fa01f" stroke="#0a5a0a" stroke-width=".5"/></svg><svg style="left:2017.5px;top:1072.8px" width="15" height="15" viewBox="0 0 16 16"><rect x="3.4" y="8" width="11.6" height="7" fill="#fff" stroke="#777" stroke-width=".9"/><rect x="3.4" y="7.2" width="11.6" height="1.2" fill="#2f7df0"/><path d="M5 10.6h3.4M9.8 10.6h3.6M5 12.8h3.4M9.8 12.8h3.6" stroke="#bbb" stroke-width=".9"/><path d="M1 2.2h4.4c2.2 0 3.6 1 3.6 3" stroke="#00c800" stroke-width="1.9" fill="none"/><path d="M1 1.2h5" stroke="#000" stroke-width=".8"/><path d="M5.8 5.2h6.4L9 9z" fill="#00c800" stroke="#000" stroke-width=".5"/></svg><svg style="left:2041px;top:1073px" width="14" height="14" viewBox="0 0 16 16"><path d="M3.6 6h8.8L8 10.6z" fill="#000"/></svg><svg style="left:2063px;top:1072.3px" width="15" height="15" viewBox="0 0 16 16"><path d="M3.2 3.2L12.8 12.8M12.8 3.2L3.2 12.8" stroke="#000" stroke-width="2.3" fill="none"/></svg><div class="t" style="left:3px;top:1093px;font-size:12.6px;letter-spacing:0.072px;">Incoming</div><div class="t" style="left:1096.5px;top:1093px;font-size:12.6px;letter-spacing:-0.080px;">Outgoing</div><div style="left:46.5px;top:1110px;width:1011px;height:4.5px;background:#fff;border-bottom:1px solid #c2c5cc"></div><div style="left:3px;top:1110px;width:2px;height:9.5px;background:#5a5d65"></div><div style="left:1084px;top:1110px;width:2px;height:10px;background:#fbfbfc"></div><div style="left:1086.5px;top:1093px;width:9.5px;height:27px;background:#d6d9e0;border-left:1px solid #8f929a;border-right:1.500px solid #7d8088"></div><div style="left:1089px;top:1097px;width:4px;height:17.5px;border:1px solid #a9acb4;border-radius:2px;background:#dfe2e8"></div><div style="left:1096px;top:1110.4px;width:1.8px;height:9.6px;background:#6a6d75"></div><div style="left:1139px;top:1110px;width:915px;height:4.5px;background:#fff;border-bottom:1px solid #c2c5cc"></div><div style="left:2080px;top:1110px;width:1.5px;height:10px;background:#fbfbfc"></div><div style="left:0px;top:1119px;width:2083px;height:3px;background:#fbfbfc"></div><div style="left:0px;top:1122.5px;width:2083px;height:1.5px;background:#74777f"></div><div style="left:0px;top:1124px;width:2083px;height:29px;background:#d9dce3"></div><svg style="left:2.5px;top:1131px" width="17" height="17" viewBox="0 0 16 16"><circle cx="8" cy="8" r="7.400" fill="#fff" stroke="#2a2a2a" stroke-width=".9"/><path d="M2.600 9.400c.8-2.800 3-5.200 6-6.200l2.800-.4 1.400 2.600-1.400.6 1.200 2.400-1.600 2-1-.8-.6 2.600-2.600.8.400-2-1.600.6.800-2.200z" fill="#e01a1a"/><path d="M6.200 9.600l1.800 1.200-.6 1.400z" fill="#fff"/><path d="M10.400 5.200l.8.600" stroke="#f0a030" stroke-width=".9"/></svg><div style="left:22px;top:1127px;width:1576px;height:26px;border:2px solid;border-color:#74777f #fbfbfc #fbfbfc #74777f;background:#d9dce3"></div><div style="left:1603px;top:1127px;width:102px;height:26px;border:2px solid;border-color:#74777f #fbfbfc #fbfbfc #74777f;background:#d9dce3"></div><div style="left:1710px;top:1127px;width:136px;height:26px;border:2px solid;border-color:#74777f #fbfbfc #fbfbfc #74777f;background:#d9dce3"></div><div style="left:1851px;top:1127px;width:206px;height:26px;border:2px solid;border-color:#74777f #fbfbfc #fbfbfc #74777f;background:#d9dce3"></div><div style="left:2062px;top:1127px;width:24px;height:26px;border:2px solid;border-color:#74777f #fbfbfc #fbfbfc #74777f;background:#d9dce3"></div><div class="t" style="left:26.3px;top:1132px;font-size:12.6px;color:#939393;letter-spacing:0.024px;">Address not found in program memory: 3ffc1d80</div><div class="t" style="left:1607px;top:1132px;font-size:12.6px;letter-spacing:0.119px;">400d4f5f</div><div class="t" style="left:1857px;top:1132px;font-size:12.6px;letter-spacing:-0.067px;">srli a3,a0,0x6</div><div style="left:0px;top:1153px;width:2083px;height:8px;background:#17191c"></div><div style="left:736px;top:1153px;width:740px;height:8px;background:#000"></div><div style="left:0px;top:1153px;width:2083px;height:8px;overflow:hidden"><div class="m" style="left:746px;top:-3px;color:#e4e4e4;font-size:15px;letter-spacing:0;line-height:18px;-webkit-text-stroke:0.300px">4438  ~/Downloads/gradle-6.9.3/bin/gradle -PGHIDRA_INSTALL_DIR=/home/victor/Pro</div><div style="left:1464px;top:1px;width:6px;height:8px;background:#5a5a5a"></div><div style="left:1470px;top:1px;width:6px;height:8px;background:#2e2e2e"></div></div><svg style="left:760px;top:390px" width="170" height="70" viewBox="0 0 170 70"><path d="M151.200 9.200L36 47" stroke="#ff0a0a" stroke-width="2.600"/><path d="M16.700 52.400L36 39l4.800 13.500z" fill="#ff0a0a"/></svg><div class="t" style="left:940px;top:394.30px;font-size:24px;line-height:30px;height:30px;color:#ff0a0a;letter-spacing:0.782px;-webkit-text-stroke:0.300px">Entry point to the middle of an instruction,</div><div class="t" style="left:945.5px;top:427.20px;font-size:24px;line-height:30px;height:30px;color:#ff0a0a;letter-spacing:0.590px;-webkit-text-stroke:0.300px">this is clearly wrong</div></div></body></html>
